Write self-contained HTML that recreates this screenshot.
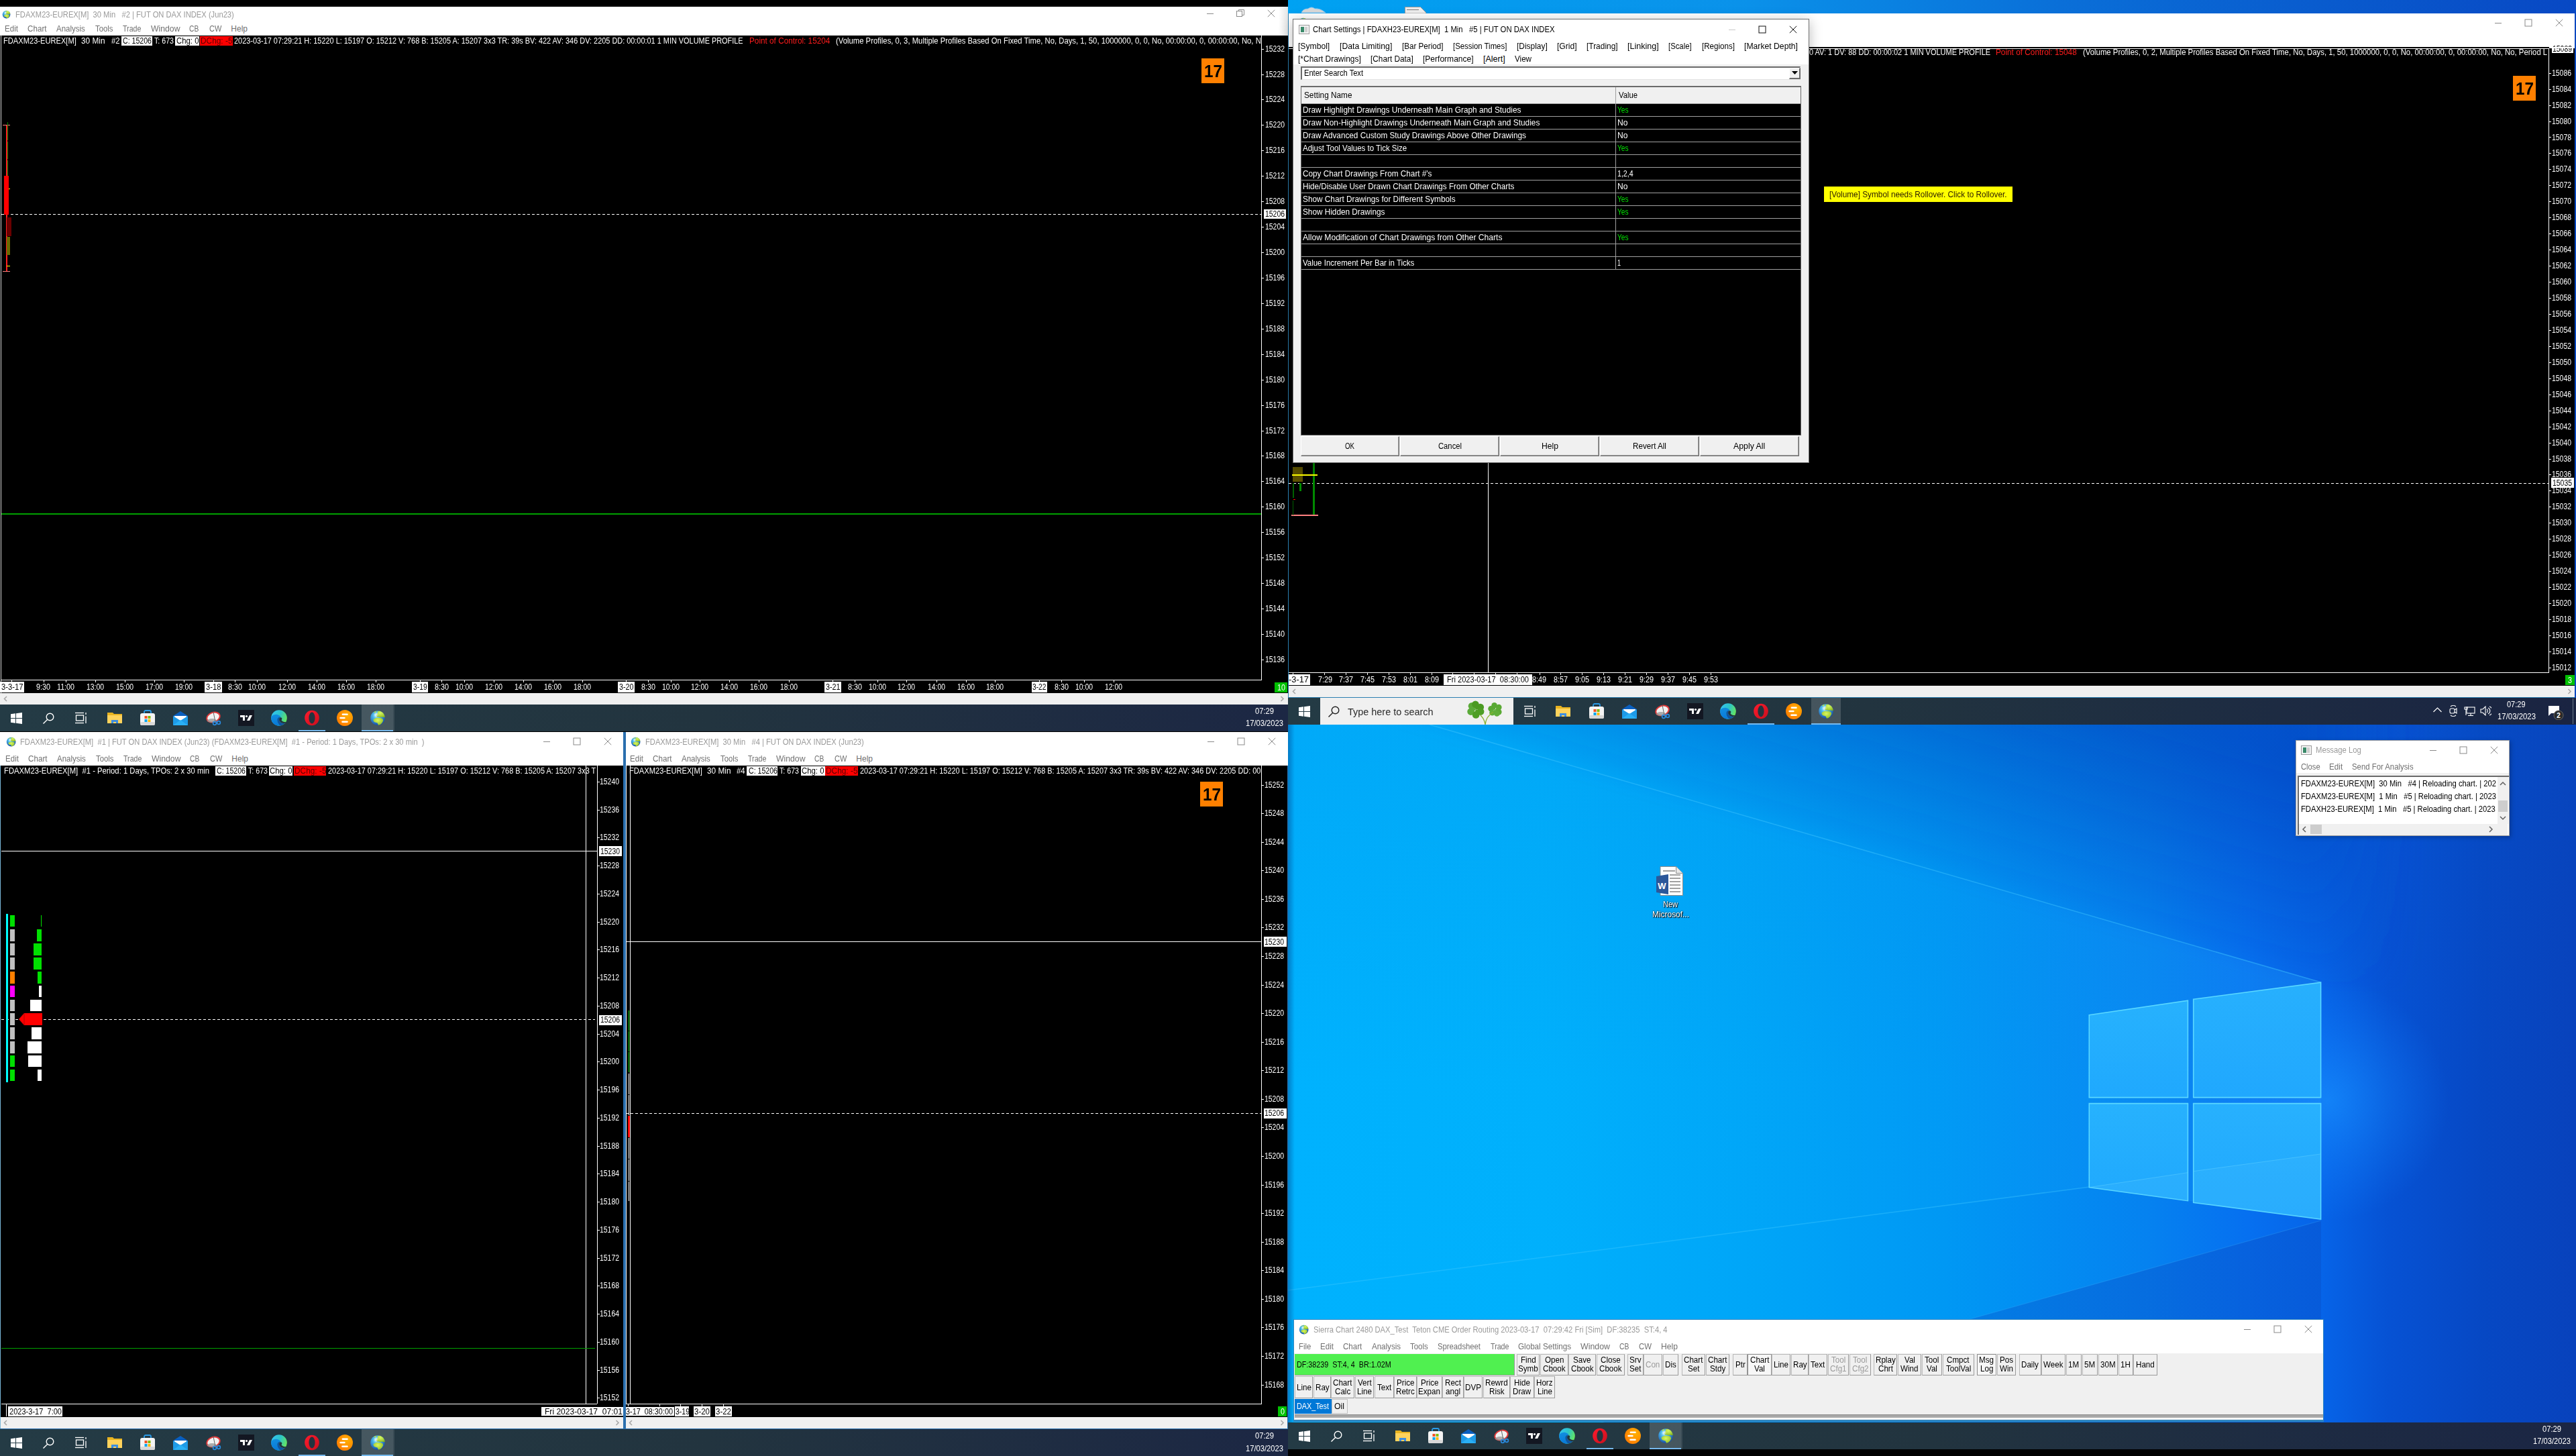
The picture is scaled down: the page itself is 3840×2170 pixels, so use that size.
<!DOCTYPE html>
<html><head><meta charset="utf-8"><style>
html,body{margin:0;padding:0;width:3840px;height:2170px;overflow:hidden;background:#000;}
body{position:relative;font-family:"Liberation Sans",sans-serif;}
div,svg{position:absolute;}
div{box-sizing:border-box;}
</style></head><body>
<div style="left:0px;top:10px;width:1920px;height:42px;background:#fff;"></div>
<div style="left:0px;top:52px;width:1920px;height:1px;background:#ececec;"></div>
<svg style="left:2.95455px;top:15.4545px" width="13.0909" height="13.0909" viewBox="0 0 24 24"><defs><radialGradient id="gg1" cx="0.42" cy="0.33" r="0.7"><stop offset="0" stop-color="#b8f0ff"/><stop offset="0.35" stop-color="#4ab8ec"/><stop offset="1" stop-color="#1448a0"/></radialGradient>
<radialGradient id="gc1" cx="0.45" cy="0.35" r="0.75"><stop offset="0" stop-color="#d8f860"/><stop offset="0.6" stop-color="#a8d038"/><stop offset="1" stop-color="#7aa818"/></radialGradient>
<radialGradient id="gh1" cx="0.5" cy="0.5" r="0.5"><stop offset="0" stop-color="#ffffff" stop-opacity="0.75"/><stop offset="1" stop-color="#ffffff" stop-opacity="0"/></radialGradient>
<clipPath id="gcl1"><circle cx="12" cy="12" r="10.8"/></clipPath></defs>
<circle cx="12" cy="12" r="10.8" fill="url(#gg1)"/>
<g clip-path="url(#gcl1)" fill="url(#gc1)">
<path d="M11.5,2.5 L16,1 L20,3 L23,7 L23.5,10.8 L21,11.2 L18.5,10.6 L16,11.3 L14,10.6 L11,10.4 L9.6,8.2 L10.6,6.2 L12,5z"/>
<path d="M6,3.8 L9.8,1.6 L10,3 L7.5,4.8z"/>
<path d="M5.5,15.6 L5.8,14 L9.7,11.7 L13,12 L16.4,12.1 L19.3,13.2 L20.3,15.9 L18.3,19.8 L15.5,22.3 L13.1,23 L11.6,19.4 L6.8,17.9z"/>
</g>
<circle cx="9.7" cy="7.3" r="4" fill="url(#gh1)"/></svg>
<div style="left:23.30px;top:14.00px;height:16px;line-height:16px;font-size:12.5px;color:#9a9a9a;white-space:pre;transform:scaleX(0.8945);transform-origin:0 0;">FDAXM23-EUREX[M]  30 Min   #2 | FUT ON DAX INDEX (Jun23)</div>
<div style="left:1906px;top:10px;width:14px;height:42px;background:linear-gradient(90deg,rgba(0,0,0,0),rgba(0,0,0,0.10));"></div>
<div style="left:1799px;top:20px;width:10px;height:1px;background:#8a8a8a;"></div>
<svg style="left:1843px;top:14px" width="12" height="12"><g fill="none" stroke="#8a8a8a" stroke-width="1"><path d="M3.5,3 v-2.5 h8 v8 h-3"/><rect x="0.5" y="2.5" width="8" height="8"/></g></svg>
<svg style="left:1889px;top:14px" width="12" height="12"><g stroke="#8a8a8a" stroke-width="1"><line x1="0.8" y1="0.8" x2="11.2" y2="11.2"/><line x1="11.2" y1="0.8" x2="0.8" y2="11.2"/></g></svg>
<div style="left:7.10px;top:35.00px;height:16px;line-height:16px;font-size:12px;color:#707070;white-space:pre;transform:scaleX(0.9624);transform-origin:0 0;">Edit</div>
<div style="left:41.40px;top:35.00px;height:16px;line-height:16px;font-size:12px;color:#707070;white-space:pre;transform:scaleX(0.9712);transform-origin:0 0;">Chart</div>
<div style="left:84.20px;top:35.00px;height:16px;line-height:16px;font-size:12px;color:#707070;white-space:pre;transform:scaleX(0.9578);transform-origin:0 0;">Analysis</div>
<div style="left:141.60px;top:35.00px;height:16px;line-height:16px;font-size:12px;color:#707070;white-space:pre;transform:scaleX(0.9424);transform-origin:0 0;">Tools</div>
<div style="left:182.60px;top:35.00px;height:16px;line-height:16px;font-size:12px;color:#707070;white-space:pre;transform:scaleX(0.8867);transform-origin:0 0;">Trade</div>
<div style="left:224.50px;top:35.00px;height:16px;line-height:16px;font-size:12px;color:#707070;white-space:pre;transform:scaleX(1.0192);transform-origin:0 0;">Window</div>
<div style="left:282.30px;top:35.00px;height:16px;line-height:16px;font-size:12px;color:#707070;white-space:pre;transform:scaleX(0.8578);transform-origin:0 0;">CB</div>
<div style="left:311.50px;top:35.00px;height:16px;line-height:16px;font-size:12px;color:#707070;white-space:pre;transform:scaleX(0.9154);transform-origin:0 0;">CW</div>
<div style="left:344.30px;top:35.00px;height:16px;line-height:16px;font-size:12px;color:#707070;white-space:pre;">Help</div>
<div style="left:1px;top:53px;width:1px;height:980px;background:#d8d8d8;"></div>
<div style="left:5.20px;top:52.50px;height:16px;line-height:16px;font-size:12px;color:#fff;white-space:pre;transform:scaleX(0.9271);transform-origin:0 0;">FDAXM23-EUREX[M]</div>
<div style="left:121.00px;top:52.50px;height:16px;line-height:16px;font-size:12px;color:#fff;white-space:pre;transform:scaleX(0.9856);transform-origin:0 0;">30 Min</div>
<div style="left:165.80px;top:52.50px;height:16px;line-height:16px;font-size:12px;color:#fff;white-space:pre;transform:scaleX(0.9515);transform-origin:0 0;">#2</div>
<div style="left:181px;top:54px;width:46px;height:14px;background:#fff;"></div>
<div style="left:183.00px;top:52.50px;height:16px;line-height:16px;font-size:12px;color:#000;white-space:pre;transform:scaleX(0.8829);transform-origin:0 0;">C: 15206</div>
<div style="left:229.50px;top:52.50px;height:16px;line-height:16px;font-size:12px;color:#fff;white-space:pre;transform:scaleX(0.8871);transform-origin:0 0;">T: 673</div>
<div style="left:261px;top:54px;width:36px;height:14px;background:#fff;"></div>
<div style="left:262.50px;top:52.50px;height:16px;line-height:16px;font-size:12px;color:#000;white-space:pre;transform:scaleX(0.9475);transform-origin:0 0;">Chg: 0</div>
<div style="left:297.7px;top:54px;width:49.3px;height:14px;background:#ff0000;"></div>
<div style="left:298.50px;top:52.50px;height:16px;line-height:16px;font-size:12px;color:#5a0000;white-space:pre;transform:scaleX(0.9892);transform-origin:0 0;">DChg: -5</div>
<div style="left:349.00px;top:52.50px;height:16px;line-height:16px;font-size:12px;color:#fff;white-space:pre;transform:scaleX(0.9093);transform-origin:0 0;">2023-03-17 07:29:21 H: 15220 L: 15197 O: 15212 V: 768 B: 15205 A: 15207 3x3 TR: 39s BV: 422 AV: 346 DV: 2205 DD: 00:00:01 1 MIN VOLUME PROFILE</div>
<div style="left:1117.00px;top:52.50px;height:16px;line-height:16px;font-size:12px;color:#ff1c1c;white-space:pre;transform:scaleX(0.9801);transform-origin:0 0;">Point of Control: 15204</div>
<div style="left:1246.00px;top:52.50px;height:16px;line-height:16px;font-size:12px;color:#fff;white-space:pre;transform:scaleX(0.9417);transform-origin:0 0;">(Volume Profiles, 0, 3, Multiple Profiles Based On Fixed Time, No, Days, 1, 50, 1000000, 0, 0, No, 00:00:00, 0, 00:00:00, No, N</div>
<div style="left:1880px;top:53px;width:1px;height:961px;background:#fff;"></div>
<div style="left:1px;top:1013px;width:1880px;height:1px;background:#fff;"></div>
<div style="left:1881px;top:73px;width:3px;height:1px;background:#fff;"></div>
<div style="left:1886.00px;top:64.60px;height:16px;line-height:16px;font-size:12px;color:#fff;white-space:pre;transform:scaleX(0.8691);transform-origin:0 0;">15232</div>
<div style="left:1881px;top:111px;width:3px;height:1px;background:#fff;"></div>
<div style="left:1886.00px;top:102.53px;height:16px;line-height:16px;font-size:12px;color:#fff;white-space:pre;transform:scaleX(0.8691);transform-origin:0 0;">15228</div>
<div style="left:1881px;top:148px;width:3px;height:1px;background:#fff;"></div>
<div style="left:1886.00px;top:140.46px;height:16px;line-height:16px;font-size:12px;color:#fff;white-space:pre;transform:scaleX(0.8691);transform-origin:0 0;">15224</div>
<div style="left:1881px;top:186px;width:3px;height:1px;background:#fff;"></div>
<div style="left:1886.00px;top:178.39px;height:16px;line-height:16px;font-size:12px;color:#fff;white-space:pre;transform:scaleX(0.8691);transform-origin:0 0;">15220</div>
<div style="left:1881px;top:224px;width:3px;height:1px;background:#fff;"></div>
<div style="left:1886.00px;top:216.32px;height:16px;line-height:16px;font-size:12px;color:#fff;white-space:pre;transform:scaleX(0.8691);transform-origin:0 0;">15216</div>
<div style="left:1881px;top:262px;width:3px;height:1px;background:#fff;"></div>
<div style="left:1886.00px;top:254.25px;height:16px;line-height:16px;font-size:12px;color:#fff;white-space:pre;transform:scaleX(0.8691);transform-origin:0 0;">15212</div>
<div style="left:1881px;top:300px;width:3px;height:1px;background:#fff;"></div>
<div style="left:1886.00px;top:292.18px;height:16px;line-height:16px;font-size:12px;color:#fff;white-space:pre;transform:scaleX(0.8691);transform-origin:0 0;">15208</div>
<div style="left:1881px;top:338px;width:3px;height:1px;background:#fff;"></div>
<div style="left:1886.00px;top:330.11px;height:16px;line-height:16px;font-size:12px;color:#fff;white-space:pre;transform:scaleX(0.8691);transform-origin:0 0;">15204</div>
<div style="left:1881px;top:376px;width:3px;height:1px;background:#fff;"></div>
<div style="left:1886.00px;top:368.04px;height:16px;line-height:16px;font-size:12px;color:#fff;white-space:pre;transform:scaleX(0.8691);transform-origin:0 0;">15200</div>
<div style="left:1881px;top:414px;width:3px;height:1px;background:#fff;"></div>
<div style="left:1886.00px;top:405.97px;height:16px;line-height:16px;font-size:12px;color:#fff;white-space:pre;transform:scaleX(0.8691);transform-origin:0 0;">15196</div>
<div style="left:1881px;top:452px;width:3px;height:1px;background:#fff;"></div>
<div style="left:1886.00px;top:443.90px;height:16px;line-height:16px;font-size:12px;color:#fff;white-space:pre;transform:scaleX(0.8691);transform-origin:0 0;">15192</div>
<div style="left:1881px;top:490px;width:3px;height:1px;background:#fff;"></div>
<div style="left:1886.00px;top:481.83px;height:16px;line-height:16px;font-size:12px;color:#fff;white-space:pre;transform:scaleX(0.8691);transform-origin:0 0;">15188</div>
<div style="left:1881px;top:528px;width:3px;height:1px;background:#fff;"></div>
<div style="left:1886.00px;top:519.76px;height:16px;line-height:16px;font-size:12px;color:#fff;white-space:pre;transform:scaleX(0.8691);transform-origin:0 0;">15184</div>
<div style="left:1881px;top:566px;width:3px;height:1px;background:#fff;"></div>
<div style="left:1886.00px;top:557.69px;height:16px;line-height:16px;font-size:12px;color:#fff;white-space:pre;transform:scaleX(0.8691);transform-origin:0 0;">15180</div>
<div style="left:1881px;top:604px;width:3px;height:1px;background:#fff;"></div>
<div style="left:1886.00px;top:595.62px;height:16px;line-height:16px;font-size:12px;color:#fff;white-space:pre;transform:scaleX(0.8691);transform-origin:0 0;">15176</div>
<div style="left:1881px;top:642px;width:3px;height:1px;background:#fff;"></div>
<div style="left:1886.00px;top:633.55px;height:16px;line-height:16px;font-size:12px;color:#fff;white-space:pre;transform:scaleX(0.8691);transform-origin:0 0;">15172</div>
<div style="left:1881px;top:679px;width:3px;height:1px;background:#fff;"></div>
<div style="left:1886.00px;top:671.48px;height:16px;line-height:16px;font-size:12px;color:#fff;white-space:pre;transform:scaleX(0.8691);transform-origin:0 0;">15168</div>
<div style="left:1881px;top:717px;width:3px;height:1px;background:#fff;"></div>
<div style="left:1886.00px;top:709.41px;height:16px;line-height:16px;font-size:12px;color:#fff;white-space:pre;transform:scaleX(0.8691);transform-origin:0 0;">15164</div>
<div style="left:1881px;top:755px;width:3px;height:1px;background:#fff;"></div>
<div style="left:1886.00px;top:747.34px;height:16px;line-height:16px;font-size:12px;color:#fff;white-space:pre;transform:scaleX(0.8691);transform-origin:0 0;">15160</div>
<div style="left:1881px;top:793px;width:3px;height:1px;background:#fff;"></div>
<div style="left:1886.00px;top:785.27px;height:16px;line-height:16px;font-size:12px;color:#fff;white-space:pre;transform:scaleX(0.8691);transform-origin:0 0;">15156</div>
<div style="left:1881px;top:831px;width:3px;height:1px;background:#fff;"></div>
<div style="left:1886.00px;top:823.20px;height:16px;line-height:16px;font-size:12px;color:#fff;white-space:pre;transform:scaleX(0.8691);transform-origin:0 0;">15152</div>
<div style="left:1881px;top:869px;width:3px;height:1px;background:#fff;"></div>
<div style="left:1886.00px;top:861.13px;height:16px;line-height:16px;font-size:12px;color:#fff;white-space:pre;transform:scaleX(0.8691);transform-origin:0 0;">15148</div>
<div style="left:1881px;top:907px;width:3px;height:1px;background:#fff;"></div>
<div style="left:1886.00px;top:899.06px;height:16px;line-height:16px;font-size:12px;color:#fff;white-space:pre;transform:scaleX(0.8691);transform-origin:0 0;">15144</div>
<div style="left:1881px;top:945px;width:3px;height:1px;background:#fff;"></div>
<div style="left:1886.00px;top:936.99px;height:16px;line-height:16px;font-size:12px;color:#fff;white-space:pre;transform:scaleX(0.8691);transform-origin:0 0;">15140</div>
<div style="left:1881px;top:983px;width:3px;height:1px;background:#fff;"></div>
<div style="left:1886.00px;top:974.92px;height:16px;line-height:16px;font-size:12px;color:#fff;white-space:pre;transform:scaleX(0.8691);transform-origin:0 0;">15136</div>
<div style="left:2px;top:319px;width:1878px;height:1px;background:repeating-linear-gradient(90deg,#fff 0 4px,transparent 4px 7px);"></div>
<div style="left:1884px;top:312px;width:33px;height:14px;background:#fff;"></div>
<div style="left:1886.00px;top:311.00px;height:16px;line-height:16px;font-size:12px;color:#000;white-space:pre;transform:scaleX(0.8691);transform-origin:0 0;">15206</div>
<div style="left:2px;top:765px;width:1878px;height:1.5px;background:#00a000;"></div>
<div style="left:1791px;top:87px;width:34px;height:37px;background:#ff8000;"></div>
<div style="left:1794.50px;top:89.00px;height:34px;line-height:34px;font-size:26px;color:#000;white-space:pre;font-weight:700;transform:scaleX(0.9336);transform-origin:0 0;">17</div>
<div style="left:9px;top:186px;width:1.5px;height:219px;background:#ff2020;"></div>
<div style="left:4px;top:186px;width:11px;height:1.2px;background:#ff8080;"></div>
<div style="left:4px;top:404px;width:11px;height:1.2px;background:#ff8080;"></div>
<div style="left:10.5px;top:182px;width:1.2px;height:27px;background:#008000;"></div>
<div style="left:10.5px;top:211px;width:1.2px;height:26px;background:#008000;"></div>
<div style="left:10.5px;top:239px;width:1.2px;height:23px;background:#008000;"></div>
<div style="left:6px;top:262px;width:7px;height:57.5px;background:#ff0000;"></div>
<div style="left:10px;top:324px;width:7px;height:28px;background:#6a0000;"></div>
<div style="left:10px;top:353px;width:5px;height:27px;background:#6a6a00;"></div>
<div style="left:13px;top:281px;width:2px;height:1.2px;background:#ffff00;"></div>
<div style="left:10px;top:395.5px;width:5px;height:1.2px;background:#ffff00;"></div>
<div style="left:17px;top:1014px;width:1px;height:3px;background:#fff;"></div>
<div style="left:65px;top:1014px;width:1px;height:3px;background:#fff;"></div>
<div style="left:98px;top:1014px;width:1px;height:3px;background:#fff;"></div>
<div style="left:142px;top:1014px;width:1px;height:3px;background:#fff;"></div>
<div style="left:186px;top:1014px;width:1px;height:3px;background:#fff;"></div>
<div style="left:230px;top:1014px;width:1px;height:3px;background:#fff;"></div>
<div style="left:274px;top:1014px;width:1px;height:3px;background:#fff;"></div>
<div style="left:318px;top:1014px;width:1px;height:3px;background:#fff;"></div>
<div style="left:350px;top:1014px;width:1px;height:3px;background:#fff;"></div>
<div style="left:383px;top:1014px;width:1px;height:3px;background:#fff;"></div>
<div style="left:428px;top:1014px;width:1px;height:3px;background:#fff;"></div>
<div style="left:472px;top:1014px;width:1px;height:3px;background:#fff;"></div>
<div style="left:516px;top:1014px;width:1px;height:3px;background:#fff;"></div>
<div style="left:560px;top:1014px;width:1px;height:3px;background:#fff;"></div>
<div style="left:626px;top:1014px;width:1px;height:3px;background:#fff;"></div>
<div style="left:658px;top:1014px;width:1px;height:3px;background:#fff;"></div>
<div style="left:692px;top:1014px;width:1px;height:3px;background:#fff;"></div>
<div style="left:736px;top:1014px;width:1px;height:3px;background:#fff;"></div>
<div style="left:780px;top:1014px;width:1px;height:3px;background:#fff;"></div>
<div style="left:824px;top:1014px;width:1px;height:3px;background:#fff;"></div>
<div style="left:868px;top:1014px;width:1px;height:3px;background:#fff;"></div>
<div style="left:933px;top:1014px;width:1px;height:3px;background:#fff;"></div>
<div style="left:966px;top:1014px;width:1px;height:3px;background:#fff;"></div>
<div style="left:1000px;top:1014px;width:1px;height:3px;background:#fff;"></div>
<div style="left:1043px;top:1014px;width:1px;height:3px;background:#fff;"></div>
<div style="left:1087px;top:1014px;width:1px;height:3px;background:#fff;"></div>
<div style="left:1131px;top:1014px;width:1px;height:3px;background:#fff;"></div>
<div style="left:1176px;top:1014px;width:1px;height:3px;background:#fff;"></div>
<div style="left:1241px;top:1014px;width:1px;height:3px;background:#fff;"></div>
<div style="left:1274px;top:1014px;width:1px;height:3px;background:#fff;"></div>
<div style="left:1308px;top:1014px;width:1px;height:3px;background:#fff;"></div>
<div style="left:1351px;top:1014px;width:1px;height:3px;background:#fff;"></div>
<div style="left:1396px;top:1014px;width:1px;height:3px;background:#fff;"></div>
<div style="left:1440px;top:1014px;width:1px;height:3px;background:#fff;"></div>
<div style="left:1483px;top:1014px;width:1px;height:3px;background:#fff;"></div>
<div style="left:1549px;top:1014px;width:1px;height:3px;background:#fff;"></div>
<div style="left:1582px;top:1014px;width:1px;height:3px;background:#fff;"></div>
<div style="left:1616px;top:1014px;width:1px;height:3px;background:#fff;"></div>
<div style="left:1660px;top:1014px;width:1px;height:3px;background:#fff;"></div>
<div style="left:0px;top:1016px;width:35.6px;height:16px;background:#fff;"></div>
<div style="left:1.50px;top:1016.00px;height:16px;line-height:16px;font-size:12px;color:#000;white-space:pre;transform:scaleX(0.9398);transform-origin:0 0;">3-3-17</div>
<div style="left:54.10px;top:1016.00px;height:16px;line-height:16px;font-size:12px;color:#fff;white-space:pre;transform:scaleX(0.8991);transform-origin:0 0;">9:30</div>
<div style="left:84.80px;top:1016.00px;height:16px;line-height:16px;font-size:12px;color:#fff;white-space:pre;transform:scaleX(0.8923);transform-origin:0 0;">11:00</div>
<div style="left:128.50px;top:1016.00px;height:16px;line-height:16px;font-size:12px;color:#fff;white-space:pre;transform:scaleX(0.8658);transform-origin:0 0;">13:00</div>
<div style="left:172.50px;top:1016.00px;height:16px;line-height:16px;font-size:12px;color:#fff;white-space:pre;transform:scaleX(0.8658);transform-origin:0 0;">15:00</div>
<div style="left:216.60px;top:1016.00px;height:16px;line-height:16px;font-size:12px;color:#fff;white-space:pre;transform:scaleX(0.8658);transform-origin:0 0;">17:00</div>
<div style="left:260.60px;top:1016.00px;height:16px;line-height:16px;font-size:12px;color:#fff;white-space:pre;transform:scaleX(0.8658);transform-origin:0 0;">19:00</div>
<div style="left:305px;top:1016px;width:25.5px;height:16px;background:#fff;"></div>
<div style="left:306.50px;top:1016.00px;height:16px;line-height:16px;font-size:12px;color:#000;white-space:pre;transform:scaleX(0.9368);transform-origin:0 0;">3-18</div>
<div style="left:340.00px;top:1016.00px;height:16px;line-height:16px;font-size:12px;color:#fff;white-space:pre;transform:scaleX(0.8991);transform-origin:0 0;">8:30</div>
<div style="left:370.30px;top:1016.00px;height:16px;line-height:16px;font-size:12px;color:#fff;white-space:pre;transform:scaleX(0.8658);transform-origin:0 0;">10:00</div>
<div style="left:414.70px;top:1016.00px;height:16px;line-height:16px;font-size:12px;color:#fff;white-space:pre;transform:scaleX(0.8658);transform-origin:0 0;">12:00</div>
<div style="left:458.70px;top:1016.00px;height:16px;line-height:16px;font-size:12px;color:#fff;white-space:pre;transform:scaleX(0.8658);transform-origin:0 0;">14:00</div>
<div style="left:502.70px;top:1016.00px;height:16px;line-height:16px;font-size:12px;color:#fff;white-space:pre;transform:scaleX(0.8658);transform-origin:0 0;">16:00</div>
<div style="left:546.70px;top:1016.00px;height:16px;line-height:16px;font-size:12px;color:#fff;white-space:pre;transform:scaleX(0.8658);transform-origin:0 0;">18:00</div>
<div style="left:614px;top:1016px;width:23.7px;height:16px;background:#fff;"></div>
<div style="left:615.50px;top:1016.00px;height:16px;line-height:16px;font-size:12px;color:#000;white-space:pre;transform:scaleX(0.8619);transform-origin:0 0;">3-19</div>
<div style="left:647.50px;top:1016.00px;height:16px;line-height:16px;font-size:12px;color:#fff;white-space:pre;transform:scaleX(0.8991);transform-origin:0 0;">8:30</div>
<div style="left:678.80px;top:1016.00px;height:16px;line-height:16px;font-size:12px;color:#fff;white-space:pre;transform:scaleX(0.8658);transform-origin:0 0;">10:00</div>
<div style="left:722.50px;top:1016.00px;height:16px;line-height:16px;font-size:12px;color:#fff;white-space:pre;transform:scaleX(0.8658);transform-origin:0 0;">12:00</div>
<div style="left:766.50px;top:1016.00px;height:16px;line-height:16px;font-size:12px;color:#fff;white-space:pre;transform:scaleX(0.8658);transform-origin:0 0;">14:00</div>
<div style="left:810.50px;top:1016.00px;height:16px;line-height:16px;font-size:12px;color:#fff;white-space:pre;transform:scaleX(0.8658);transform-origin:0 0;">16:00</div>
<div style="left:854.60px;top:1016.00px;height:16px;line-height:16px;font-size:12px;color:#fff;white-space:pre;transform:scaleX(0.8658);transform-origin:0 0;">18:00</div>
<div style="left:921px;top:1016px;width:24.5px;height:16px;background:#fff;"></div>
<div style="left:922.50px;top:1016.00px;height:16px;line-height:16px;font-size:12px;color:#000;white-space:pre;transform:scaleX(0.8952);transform-origin:0 0;">3-20</div>
<div style="left:955.50px;top:1016.00px;height:16px;line-height:16px;font-size:12px;color:#fff;white-space:pre;transform:scaleX(0.8991);transform-origin:0 0;">8:30</div>
<div style="left:986.80px;top:1016.00px;height:16px;line-height:16px;font-size:12px;color:#fff;white-space:pre;transform:scaleX(0.8658);transform-origin:0 0;">10:00</div>
<div style="left:1030.00px;top:1016.00px;height:16px;line-height:16px;font-size:12px;color:#fff;white-space:pre;transform:scaleX(0.8658);transform-origin:0 0;">12:00</div>
<div style="left:1074.00px;top:1016.00px;height:16px;line-height:16px;font-size:12px;color:#fff;white-space:pre;transform:scaleX(0.8658);transform-origin:0 0;">14:00</div>
<div style="left:1118.00px;top:1016.00px;height:16px;line-height:16px;font-size:12px;color:#fff;white-space:pre;transform:scaleX(0.8658);transform-origin:0 0;">16:00</div>
<div style="left:1162.60px;top:1016.00px;height:16px;line-height:16px;font-size:12px;color:#fff;white-space:pre;transform:scaleX(0.8658);transform-origin:0 0;">18:00</div>
<div style="left:1229px;top:1016px;width:24.6px;height:16px;background:#fff;"></div>
<div style="left:1230.50px;top:1016.00px;height:16px;line-height:16px;font-size:12px;color:#000;white-space:pre;transform:scaleX(0.8993);transform-origin:0 0;">3-21</div>
<div style="left:1263.50px;top:1016.00px;height:16px;line-height:16px;font-size:12px;color:#fff;white-space:pre;transform:scaleX(0.8991);transform-origin:0 0;">8:30</div>
<div style="left:1294.80px;top:1016.00px;height:16px;line-height:16px;font-size:12px;color:#fff;white-space:pre;transform:scaleX(0.8658);transform-origin:0 0;">10:00</div>
<div style="left:1338.40px;top:1016.00px;height:16px;line-height:16px;font-size:12px;color:#fff;white-space:pre;transform:scaleX(0.8658);transform-origin:0 0;">12:00</div>
<div style="left:1382.70px;top:1016.00px;height:16px;line-height:16px;font-size:12px;color:#fff;white-space:pre;transform:scaleX(0.8658);transform-origin:0 0;">14:00</div>
<div style="left:1426.70px;top:1016.00px;height:16px;line-height:16px;font-size:12px;color:#fff;white-space:pre;transform:scaleX(0.8658);transform-origin:0 0;">16:00</div>
<div style="left:1470.00px;top:1016.00px;height:16px;line-height:16px;font-size:12px;color:#fff;white-space:pre;transform:scaleX(0.8658);transform-origin:0 0;">18:00</div>
<div style="left:1537.5px;top:1016px;width:23.5px;height:16px;background:#fff;"></div>
<div style="left:1539.00px;top:1016.00px;height:16px;line-height:16px;font-size:12px;color:#000;white-space:pre;transform:scaleX(0.8535);transform-origin:0 0;">3-22</div>
<div style="left:1571.50px;top:1016.00px;height:16px;line-height:16px;font-size:12px;color:#fff;white-space:pre;transform:scaleX(0.8991);transform-origin:0 0;">8:30</div>
<div style="left:1603.00px;top:1016.00px;height:16px;line-height:16px;font-size:12px;color:#fff;white-space:pre;transform:scaleX(0.8658);transform-origin:0 0;">10:00</div>
<div style="left:1646.50px;top:1016.00px;height:16px;line-height:16px;font-size:12px;color:#fff;white-space:pre;transform:scaleX(0.8658);transform-origin:0 0;">12:00</div>
<div style="left:1900px;top:1017px;width:19px;height:15px;background:#00c000;"></div>
<div style="left:1903.50px;top:1016.50px;height:16px;line-height:16px;font-size:12px;color:#fff;white-space:pre;transform:scaleX(0.8990);transform-origin:0 0;">10</div>
<div style="left:0px;top:1033px;width:1920px;height:17px;background:#f0f0f0;"></div>
<svg style="left:4.5px;top:1037px" width="7" height="9"><path d="M5,1 L1.5,4.5 L5,8" fill="none" stroke="#a8a8a8" stroke-width="1.6"/></svg>
<svg style="left:1907.5px;top:1037px" width="7" height="9"><path d="M1.5,1 L5,4.5 L1.5,8" fill="none" stroke="#a8a8a8" stroke-width="1.6"/></svg>
<div style="left:0px;top:1050px;width:1920px;height:40px;background:linear-gradient(90deg,#243b45 0%,#22343f 55%,#1c2744 100%);"></div>
<div style="left:539px;top:1050px;width:47px;height:40px;background:rgba(255,255,255,0.16);"></div>
<div style="left:539px;top:1088px;width:47px;height:2px;background:#76b9ed;"></div>
<div style="left:586px;top:1050px;width:1.5px;height:40px;background:rgba(255,255,255,0.10);"></div>
<div style="left:445px;top:1088px;width:40px;height:2px;background:#76b9ed;"></div>
<svg style="left:15.5px;top:1061.5px" width="17.0" height="17.0" viewBox="0 0 17 17"><g fill="#fff">
<polygon points="0,2.3 7,1.3 7,8 0,8"/>
<polygon points="8,1.2 17,0 17,8 8,8"/>
<polygon points="0,9 7,9 7,15.7 0,14.7"/>
<polygon points="8,9 17,9 17,17 8,15.8"/>
</g></svg>
<svg style="left:63px;top:1061px" width="18" height="18" viewBox="0 0 18 18"><g fill="none" stroke="#fff" stroke-width="1.4"><circle cx="11.5" cy="7.5" r="5.3"/><line x1="7.8" y1="11.3" x2="1.5" y2="17.5"/></g></svg>
<svg style="left:111px;top:1061px" width="19" height="18" viewBox="0 0 19 18"><g fill="none" stroke="#fff" stroke-width="1.3">
<rect x="2.5" y="5" width="11" height="8"/>
<line x1="1" y1="1.5" x2="14" y2="1.5"/><line x1="1" y1="16.5" x2="14" y2="16.5"/>
<line x1="17" y1="1" x2="17" y2="4"/><line x1="17" y1="6.5" x2="17" y2="17"/>
</g></svg>
<svg style="left:158.5px;top:1059px" width="24" height="21" viewBox="0 0 24 21"><path d="M1,3 h8 l2,2 h12 v14 h-22 z" fill="#e8b320"/>
<rect x="1" y="7" width="22" height="12" fill="#ffd35c"/>
<path d="M7,19 v-5 h10 v5 h-3 v-2 h-4 v2 z" fill="#3e8ee0"/></svg>
<svg style="left:207.5px;top:1058px" width="24" height="24" viewBox="0 0 24 24"><path d="M7,6 v-3 a2,2 0 0 1 2,-2 h6 a2,2 0 0 1 2,2 v3" fill="none" stroke="#2a9be8" stroke-width="1.8"/>
<rect x="1" y="5" width="22" height="18" rx="3" fill="#f4f4f4"/>
<rect x="1" y="18" width="22" height="5" rx="2" fill="#d8d8d8"/>
<rect x="7.5" y="9" width="4" height="4" fill="#f35325"/><rect x="12.5" y="9" width="4" height="4" fill="#81bc06"/>
<rect x="7.5" y="14" width="4" height="4" fill="#05a6f0"/><rect x="12.5" y="14" width="4" height="4" fill="#ffba08"/></svg>
<svg style="left:257px;top:1059px" width="24" height="23" viewBox="0 0 24 23"><path d="M1,8 l11,-7 l11,7 v13 h-22 z" fill="#0a5fbf"/>
<path d="M3,8 h18 v6 l-9,5 l-9,-5 z" fill="#fff"/>
<path d="M1,8 l11,7 l11,-7 v14 h-22 z" fill="#1e9be8"/>
<path d="M1,22 l11,-8 l11,8 z" fill="#2ab0f5"/></svg>
<svg style="left:307px;top:1059px" width="24" height="23" viewBox="0 0 24 23"><ellipse cx="11" cy="10" rx="10" ry="7" fill="#f2f2f2" stroke="#e03a3a" stroke-width="2" transform="rotate(-20 11 10)"/>
<ellipse cx="9" cy="15" rx="7" ry="3" fill="#9a9a9a" opacity="0.8"/>
<line x1="11" y1="2" x2="14" y2="17" stroke="#666" stroke-width="1"/>
<circle cx="13" cy="19" r="2.4" fill="none" stroke="#2a8be0" stroke-width="1.6"/>
<circle cx="19" cy="18" r="2.4" fill="none" stroke="#2a8be0" stroke-width="1.6"/></svg>
<svg style="left:355px;top:1058px" width="24" height="24" viewBox="0 0 24 24"><rect x="0" y="0" width="24" height="24" fill="#131722"/>
<path d="M3,8 h7 v8 h-3 v-5 h-4 z" fill="#fff"/><circle cx="12.5" cy="9.5" r="1.6" fill="#fff"/>
<path d="M13,16 l4,-8 h4 l-4,8 z" fill="#fff"/></svg>
<svg style="left:404px;top:1058px" width="24" height="24" viewBox="0 0 24 24"><defs><linearGradient id="eg1a" x1="0" y1="0.2" x2="1" y2="0.6"><stop offset="0" stop-color="#35c4f4"/><stop offset="0.5" stop-color="#2cc4c8"/><stop offset="1" stop-color="#6ae858"/></linearGradient>
<linearGradient id="eg1b" x1="0" y1="0" x2="0.2" y2="1"><stop offset="0" stop-color="#1290e0"/><stop offset="1" stop-color="#0878d8"/></linearGradient>
<clipPath id="ec1"><circle cx="12" cy="12" r="11.8"/></clipPath></defs>
<g clip-path="url(#ec1)">
<rect x="0" y="0" width="24" height="24" fill="url(#eg1a)"/>
<path d="M-1,11 Q3,6.5 8,6.8 Q12.5,7.2 14.5,10.5 Q11,10 9.5,13 Q8.5,17 11,20.5 Q13,24.5 17,25 L-1,25z" fill="url(#eg1b)"/>
<path d="M14.5,10.5 Q11,10 9.5,13 Q8.5,17 11,20.5 Q13,24.5 17,25 L25,25 L25,18.6 Q21,20.2 18.5,20 Q13.8,19.5 12.2,15.5 Q11.6,12.5 14.5,10.5z" fill="#0e54a4"/>
<path d="M12.2,15.5 Q11.6,12 14,11.3 Q16,11 16.4,13 Q16.2,14.5 15.5,15.2 Q16.5,17.5 19.5,18 Q22,18.3 25,17.8 L25,18.6 Q21,20.2 18.5,20 Q13.8,19.5 12.2,15.5z" fill="#22343f"/>
</g></svg>
<svg style="left:453px;top:1058px" width="24" height="24" viewBox="0 0 24 24"><defs><linearGradient id="opg" x1="0" y1="0" x2="1" y2="1"><stop offset="0" stop-color="#ff1b2d"/><stop offset="1" stop-color="#c8101e"/></linearGradient></defs>
<ellipse cx="12" cy="12" rx="10.8" ry="11.2" fill="url(#opg)"/>
<ellipse cx="12" cy="12" rx="4.6" ry="8.4" fill="#22343f"/></svg>
<svg style="left:502px;top:1058px" width="24" height="24" viewBox="0 0 24 24"><defs><radialGradient id="org" cx="0.65" cy="0.35" r="0.75"><stop offset="0" stop-color="#ffb000"/><stop offset="1" stop-color="#ff7a00"/></radialGradient></defs>
<circle cx="12" cy="12" r="12" fill="url(#org)"/>
<rect x="7.6" y="5.4" width="9.2" height="2.6" rx="1.3" fill="#fff"/>
<rect x="4.3" y="10.7" width="8.4" height="2.6" rx="1.3" fill="#fff"/>
<rect x="7.2" y="16.5" width="9.6" height="2.6" rx="1.3" fill="#fff"/></svg>
<svg style="left:550.5px;top:1058px" width="24" height="24" viewBox="0 0 24 24"><defs><radialGradient id="gg2" cx="0.42" cy="0.33" r="0.7"><stop offset="0" stop-color="#b8f0ff"/><stop offset="0.35" stop-color="#4ab8ec"/><stop offset="1" stop-color="#1448a0"/></radialGradient>
<radialGradient id="gc2" cx="0.45" cy="0.35" r="0.75"><stop offset="0" stop-color="#d8f860"/><stop offset="0.6" stop-color="#a8d038"/><stop offset="1" stop-color="#7aa818"/></radialGradient>
<radialGradient id="gh2" cx="0.5" cy="0.5" r="0.5"><stop offset="0" stop-color="#ffffff" stop-opacity="0.75"/><stop offset="1" stop-color="#ffffff" stop-opacity="0"/></radialGradient>
<clipPath id="gcl2"><circle cx="12" cy="12" r="10.8"/></clipPath></defs>
<circle cx="12" cy="12" r="10.8" fill="url(#gg2)"/>
<g clip-path="url(#gcl2)" fill="url(#gc2)">
<path d="M11.5,2.5 L16,1 L20,3 L23,7 L23.5,10.8 L21,11.2 L18.5,10.6 L16,11.3 L14,10.6 L11,10.4 L9.6,8.2 L10.6,6.2 L12,5z"/>
<path d="M6,3.8 L9.8,1.6 L10,3 L7.5,4.8z"/>
<path d="M5.5,15.6 L5.8,14 L9.7,11.7 L13,12 L16.4,12.1 L19.3,13.2 L20.3,15.9 L18.3,19.8 L15.5,22.3 L13.1,23 L11.6,19.4 L6.8,17.9z"/>
</g>
<circle cx="9.7" cy="7.3" r="4" fill="url(#gh2)"/></svg>
<div style="left:1870.50px;top:1052.00px;height:16px;line-height:16px;font-size:12px;color:#fff;white-space:pre;transform:scaleX(0.9324);transform-origin:0 0;">07:29</div>
<div style="left:1856.50px;top:1070.40px;height:16px;line-height:16px;font-size:12px;color:#fff;white-space:pre;transform:scaleX(0.9324);transform-origin:0 0;">17/03/2023</div>
<div style="left:1920px;top:0px;width:1920px;height:20px;background:linear-gradient(90deg,#00a2f2 0%,#0a92ea 35%,#0a6fd8 60%,#0848c4 100%);"></div>
<svg style="left:1939px;top:9px" width="38" height="11"><path d="M1,10 q2,-6 10,-6 q5,-4 10,0 q8,-1 16,6z" fill="#d8d8d8" stroke="#8cc8f0" stroke-width="1"/></svg>
<svg style="left:2094px;top:10px" width="32" height="10"><path d="M0.5,10 v-9.5 h23 l8,8 v1.5z" fill="#eee" stroke="#999" stroke-width="1"/><line x1="3" y1="4.5" x2="21" y2="4.5" stroke="#888" stroke-width="1.2"/></svg>
<div style="left:1920px;top:20px;width:1919px;height:1020px;background:#fff;"></div>
<div style="left:1920px;top:20px;width:1px;height:1020px;background:#2b7fb0;"></div>
<div style="left:1921px;top:70px;width:1917px;height:952px;background:#000;"></div>
<div style="left:1921px;top:71.5px;width:1878px;height:1px;background:#fff;"></div>
<div style="left:3719px;top:34px;width:10px;height:1px;background:#8a8a8a;"></div>
<svg style="left:3763px;top:28px" width="12" height="12"><rect x="1" y="1" width="10" height="10" fill="none" stroke="#8a8a8a" stroke-width="1"/></svg>
<svg style="left:3809px;top:28px" width="12" height="12"><g stroke="#8a8a8a" stroke-width="1"><line x1="0.8" y1="0.8" x2="11.2" y2="11.2"/><line x1="11.2" y1="0.8" x2="0.8" y2="11.2"/></g></svg>
<svg style="left:1935.36px;top:26.3636px" width="15.2727" height="15.2727" viewBox="0 0 24 24"><defs><radialGradient id="gg3" cx="0.42" cy="0.33" r="0.7"><stop offset="0" stop-color="#b8f0ff"/><stop offset="0.35" stop-color="#4ab8ec"/><stop offset="1" stop-color="#1448a0"/></radialGradient>
<radialGradient id="gc3" cx="0.45" cy="0.35" r="0.75"><stop offset="0" stop-color="#d8f860"/><stop offset="0.6" stop-color="#a8d038"/><stop offset="1" stop-color="#7aa818"/></radialGradient>
<radialGradient id="gh3" cx="0.5" cy="0.5" r="0.5"><stop offset="0" stop-color="#ffffff" stop-opacity="0.75"/><stop offset="1" stop-color="#ffffff" stop-opacity="0"/></radialGradient>
<clipPath id="gcl3"><circle cx="12" cy="12" r="10.8"/></clipPath></defs>
<circle cx="12" cy="12" r="10.8" fill="url(#gg3)"/>
<g clip-path="url(#gcl3)" fill="url(#gc3)">
<path d="M11.5,2.5 L16,1 L20,3 L23,7 L23.5,10.8 L21,11.2 L18.5,10.6 L16,11.3 L14,10.6 L11,10.4 L9.6,8.2 L10.6,6.2 L12,5z"/>
<path d="M6,3.8 L9.8,1.6 L10,3 L7.5,4.8z"/>
<path d="M5.5,15.6 L5.8,14 L9.7,11.7 L13,12 L16.4,12.1 L19.3,13.2 L20.3,15.9 L18.3,19.8 L15.5,22.3 L13.1,23 L11.6,19.4 L6.8,17.9z"/>
</g>
<circle cx="9.7" cy="7.3" r="4" fill="url(#gh3)"/></svg>
<div style="left:2697.00px;top:69.60px;height:16px;line-height:16px;font-size:12px;color:#fff;white-space:pre;transform:scaleX(0.9155);transform-origin:0 0;">0 AV: 1 DV: 88 DD: 00:00:02 1 MIN VOLUME PROFILE</div>
<div style="left:2974.60px;top:69.60px;height:16px;line-height:16px;font-size:12px;color:#ff1c1c;white-space:pre;transform:scaleX(0.9833);transform-origin:0 0;">Point of Control: 15048</div>
<div style="left:3104.60px;top:69.60px;height:16px;line-height:16px;font-size:12px;color:#fff;white-space:pre;transform:scaleX(0.9468);transform-origin:0 0;">(Volume Profiles, 0, 2, Multiple Profiles Based On Fixed Time, No, Days, 1, 50, 1000000, 0, 0, No, 00:00:00, 0, 00:00:00, No, No, Period L</div>
<div style="left:3798.5px;top:72px;width:1px;height:931px;background:#fff;"></div>
<div style="left:1921px;top:1002px;width:1878.5px;height:1px;background:#fff;"></div>
<div style="left:3799.5px;top:109px;width:3px;height:1px;background:#fff;"></div>
<div style="left:3803.50px;top:100.70px;height:16px;line-height:16px;font-size:12px;color:#fff;white-space:pre;transform:scaleX(0.8691);transform-origin:0 0;">15086</div>
<div style="left:3799.5px;top:133px;width:3px;height:1px;background:#fff;"></div>
<div style="left:3803.50px;top:124.65px;height:16px;line-height:16px;font-size:12px;color:#fff;white-space:pre;transform:scaleX(0.8691);transform-origin:0 0;">15084</div>
<div style="left:3799.5px;top:157px;width:3px;height:1px;background:#fff;"></div>
<div style="left:3803.50px;top:148.60px;height:16px;line-height:16px;font-size:12px;color:#fff;white-space:pre;transform:scaleX(0.8691);transform-origin:0 0;">15082</div>
<div style="left:3799.5px;top:181px;width:3px;height:1px;background:#fff;"></div>
<div style="left:3803.50px;top:172.55px;height:16px;line-height:16px;font-size:12px;color:#fff;white-space:pre;transform:scaleX(0.8691);transform-origin:0 0;">15080</div>
<div style="left:3799.5px;top:204px;width:3px;height:1px;background:#fff;"></div>
<div style="left:3803.50px;top:196.50px;height:16px;line-height:16px;font-size:12px;color:#fff;white-space:pre;transform:scaleX(0.8691);transform-origin:0 0;">15078</div>
<div style="left:3799.5px;top:228px;width:3px;height:1px;background:#fff;"></div>
<div style="left:3803.50px;top:220.45px;height:16px;line-height:16px;font-size:12px;color:#fff;white-space:pre;transform:scaleX(0.8691);transform-origin:0 0;">15076</div>
<div style="left:3799.5px;top:252px;width:3px;height:1px;background:#fff;"></div>
<div style="left:3803.50px;top:244.40px;height:16px;line-height:16px;font-size:12px;color:#fff;white-space:pre;transform:scaleX(0.8691);transform-origin:0 0;">15074</div>
<div style="left:3799.5px;top:276px;width:3px;height:1px;background:#fff;"></div>
<div style="left:3803.50px;top:268.35px;height:16px;line-height:16px;font-size:12px;color:#fff;white-space:pre;transform:scaleX(0.8691);transform-origin:0 0;">15072</div>
<div style="left:3799.5px;top:300px;width:3px;height:1px;background:#fff;"></div>
<div style="left:3803.50px;top:292.30px;height:16px;line-height:16px;font-size:12px;color:#fff;white-space:pre;transform:scaleX(0.8691);transform-origin:0 0;">15070</div>
<div style="left:3799.5px;top:324px;width:3px;height:1px;background:#fff;"></div>
<div style="left:3803.50px;top:316.25px;height:16px;line-height:16px;font-size:12px;color:#fff;white-space:pre;transform:scaleX(0.8691);transform-origin:0 0;">15068</div>
<div style="left:3799.5px;top:348px;width:3px;height:1px;background:#fff;"></div>
<div style="left:3803.50px;top:340.20px;height:16px;line-height:16px;font-size:12px;color:#fff;white-space:pre;transform:scaleX(0.8691);transform-origin:0 0;">15066</div>
<div style="left:3799.5px;top:372px;width:3px;height:1px;background:#fff;"></div>
<div style="left:3803.50px;top:364.15px;height:16px;line-height:16px;font-size:12px;color:#fff;white-space:pre;transform:scaleX(0.8691);transform-origin:0 0;">15064</div>
<div style="left:3799.5px;top:396px;width:3px;height:1px;background:#fff;"></div>
<div style="left:3803.50px;top:388.10px;height:16px;line-height:16px;font-size:12px;color:#fff;white-space:pre;transform:scaleX(0.8691);transform-origin:0 0;">15062</div>
<div style="left:3799.5px;top:420px;width:3px;height:1px;background:#fff;"></div>
<div style="left:3803.50px;top:412.05px;height:16px;line-height:16px;font-size:12px;color:#fff;white-space:pre;transform:scaleX(0.8691);transform-origin:0 0;">15060</div>
<div style="left:3799.5px;top:444px;width:3px;height:1px;background:#fff;"></div>
<div style="left:3803.50px;top:436.00px;height:16px;line-height:16px;font-size:12px;color:#fff;white-space:pre;transform:scaleX(0.8691);transform-origin:0 0;">15058</div>
<div style="left:3799.5px;top:468px;width:3px;height:1px;background:#fff;"></div>
<div style="left:3803.50px;top:459.95px;height:16px;line-height:16px;font-size:12px;color:#fff;white-space:pre;transform:scaleX(0.8691);transform-origin:0 0;">15056</div>
<div style="left:3799.5px;top:492px;width:3px;height:1px;background:#fff;"></div>
<div style="left:3803.50px;top:483.90px;height:16px;line-height:16px;font-size:12px;color:#fff;white-space:pre;transform:scaleX(0.8691);transform-origin:0 0;">15054</div>
<div style="left:3799.5px;top:516px;width:3px;height:1px;background:#fff;"></div>
<div style="left:3803.50px;top:507.85px;height:16px;line-height:16px;font-size:12px;color:#fff;white-space:pre;transform:scaleX(0.8691);transform-origin:0 0;">15052</div>
<div style="left:3799.5px;top:540px;width:3px;height:1px;background:#fff;"></div>
<div style="left:3803.50px;top:531.80px;height:16px;line-height:16px;font-size:12px;color:#fff;white-space:pre;transform:scaleX(0.8691);transform-origin:0 0;">15050</div>
<div style="left:3799.5px;top:564px;width:3px;height:1px;background:#fff;"></div>
<div style="left:3803.50px;top:555.75px;height:16px;line-height:16px;font-size:12px;color:#fff;white-space:pre;transform:scaleX(0.8691);transform-origin:0 0;">15048</div>
<div style="left:3799.5px;top:588px;width:3px;height:1px;background:#fff;"></div>
<div style="left:3803.50px;top:579.70px;height:16px;line-height:16px;font-size:12px;color:#fff;white-space:pre;transform:scaleX(0.8691);transform-origin:0 0;">15046</div>
<div style="left:3799.5px;top:612px;width:3px;height:1px;background:#fff;"></div>
<div style="left:3803.50px;top:603.65px;height:16px;line-height:16px;font-size:12px;color:#fff;white-space:pre;transform:scaleX(0.8691);transform-origin:0 0;">15044</div>
<div style="left:3799.5px;top:636px;width:3px;height:1px;background:#fff;"></div>
<div style="left:3803.50px;top:627.60px;height:16px;line-height:16px;font-size:12px;color:#fff;white-space:pre;transform:scaleX(0.8691);transform-origin:0 0;">15042</div>
<div style="left:3799.5px;top:660px;width:3px;height:1px;background:#fff;"></div>
<div style="left:3803.50px;top:651.55px;height:16px;line-height:16px;font-size:12px;color:#fff;white-space:pre;transform:scaleX(0.8691);transform-origin:0 0;">15040</div>
<div style="left:3799.5px;top:684px;width:3px;height:1px;background:#fff;"></div>
<div style="left:3803.50px;top:675.50px;height:16px;line-height:16px;font-size:12px;color:#fff;white-space:pre;transform:scaleX(0.8691);transform-origin:0 0;">15038</div>
<div style="left:3799.5px;top:707px;width:3px;height:1px;background:#fff;"></div>
<div style="left:3803.50px;top:699.45px;height:16px;line-height:16px;font-size:12px;color:#fff;white-space:pre;transform:scaleX(0.8691);transform-origin:0 0;">15036</div>
<div style="left:3799.5px;top:731px;width:3px;height:1px;background:#fff;"></div>
<div style="left:3803.50px;top:723.40px;height:16px;line-height:16px;font-size:12px;color:#fff;white-space:pre;transform:scaleX(0.8691);transform-origin:0 0;">15034</div>
<div style="left:3799.5px;top:755px;width:3px;height:1px;background:#fff;"></div>
<div style="left:3803.50px;top:747.35px;height:16px;line-height:16px;font-size:12px;color:#fff;white-space:pre;transform:scaleX(0.8691);transform-origin:0 0;">15032</div>
<div style="left:3799.5px;top:779px;width:3px;height:1px;background:#fff;"></div>
<div style="left:3803.50px;top:771.30px;height:16px;line-height:16px;font-size:12px;color:#fff;white-space:pre;transform:scaleX(0.8691);transform-origin:0 0;">15030</div>
<div style="left:3799.5px;top:803px;width:3px;height:1px;background:#fff;"></div>
<div style="left:3803.50px;top:795.25px;height:16px;line-height:16px;font-size:12px;color:#fff;white-space:pre;transform:scaleX(0.8691);transform-origin:0 0;">15028</div>
<div style="left:3799.5px;top:827px;width:3px;height:1px;background:#fff;"></div>
<div style="left:3803.50px;top:819.20px;height:16px;line-height:16px;font-size:12px;color:#fff;white-space:pre;transform:scaleX(0.8691);transform-origin:0 0;">15026</div>
<div style="left:3799.5px;top:851px;width:3px;height:1px;background:#fff;"></div>
<div style="left:3803.50px;top:843.15px;height:16px;line-height:16px;font-size:12px;color:#fff;white-space:pre;transform:scaleX(0.8691);transform-origin:0 0;">15024</div>
<div style="left:3799.5px;top:875px;width:3px;height:1px;background:#fff;"></div>
<div style="left:3803.50px;top:867.10px;height:16px;line-height:16px;font-size:12px;color:#fff;white-space:pre;transform:scaleX(0.8691);transform-origin:0 0;">15022</div>
<div style="left:3799.5px;top:899px;width:3px;height:1px;background:#fff;"></div>
<div style="left:3803.50px;top:891.05px;height:16px;line-height:16px;font-size:12px;color:#fff;white-space:pre;transform:scaleX(0.8691);transform-origin:0 0;">15020</div>
<div style="left:3799.5px;top:923px;width:3px;height:1px;background:#fff;"></div>
<div style="left:3803.50px;top:915.00px;height:16px;line-height:16px;font-size:12px;color:#fff;white-space:pre;transform:scaleX(0.8691);transform-origin:0 0;">15018</div>
<div style="left:3799.5px;top:947px;width:3px;height:1px;background:#fff;"></div>
<div style="left:3803.50px;top:938.95px;height:16px;line-height:16px;font-size:12px;color:#fff;white-space:pre;transform:scaleX(0.8691);transform-origin:0 0;">15016</div>
<div style="left:3799.5px;top:971px;width:3px;height:1px;background:#fff;"></div>
<div style="left:3803.50px;top:962.90px;height:16px;line-height:16px;font-size:12px;color:#fff;white-space:pre;transform:scaleX(0.8691);transform-origin:0 0;">15014</div>
<div style="left:3799.5px;top:995px;width:3px;height:1px;background:#fff;"></div>
<div style="left:3803.50px;top:986.85px;height:16px;line-height:16px;font-size:12px;color:#fff;white-space:pre;transform:scaleX(0.8691);transform-origin:0 0;">15012</div>
<div style="left:3803.5px;top:70px;width:32px;height:9px;background:#fff;"></div>
<div style="left:3804.50px;top:64.50px;height:16px;line-height:16px;font-size:12px;color:#000;white-space:pre;transform:scaleX(0.8691);transform-origin:0 0;clip-path:inset(0 0 0 0);">15089</div>
<div style="left:3799.5px;top:70px;width:40px;height:1.5px;background:#fff;"></div>
<div style="left:1921px;top:719.5px;width:1877.5px;height:1px;background:repeating-linear-gradient(90deg,#fff 0 4px,transparent 4px 7px);"></div>
<div style="left:3802.5px;top:712px;width:34px;height:15px;background:#fff;"></div>
<div style="left:3804.50px;top:712.00px;height:16px;line-height:16px;font-size:12px;color:#000;white-space:pre;transform:scaleX(0.8691);transform-origin:0 0;">15035</div>
<div style="left:3746px;top:113px;width:34px;height:37px;background:#ff8000;"></div>
<div style="left:3749.50px;top:115.00px;height:34px;line-height:34px;font-size:26px;color:#000;white-space:pre;font-weight:700;transform:scaleX(0.9336);transform-origin:0 0;">17</div>
<div style="left:2719px;top:278px;width:281px;height:23px;background:#ffff00;"></div>
<div style="left:2726.50px;top:282.00px;height:16px;line-height:16px;font-size:12px;color:#2a1a00;white-space:pre;transform:scaleX(0.9841);transform-origin:0 0;">[Volume] Symbol needs Rollover. Click to Rollover.</div>
<div style="left:2218px;top:690px;width:1px;height:312px;background:#fff;"></div>
<div style="left:1927px;top:696px;width:15px;height:22px;background:#5a5000;"></div>
<div style="left:1957px;top:690px;width:3px;height:77px;background:#008a00;"></div>
<div style="left:1926px;top:707px;width:38px;height:1.5px;background:#ffff00;"></div>
<div style="left:1927px;top:720px;width:2px;height:22px;background:#006000;"></div>
<div style="left:1937px;top:720px;width:3px;height:12px;background:#008a00;"></div>
<div style="left:1925px;top:767px;width:40px;height:1.5px;background:#ff8080;"></div>
<div style="left:1928px;top:744px;width:3px;height:1px;background:#ff0000;"></div>
<div style="left:1927px;top:746px;width:1px;height:22px;background:#006000;"></div>
<div style="left:1927px;top:1003px;width:1px;height:3px;background:#fff;"></div>
<div style="left:1974px;top:1003px;width:1px;height:3px;background:#fff;"></div>
<div style="left:2006px;top:1003px;width:1px;height:3px;background:#fff;"></div>
<div style="left:2038px;top:1003px;width:1px;height:3px;background:#fff;"></div>
<div style="left:2070px;top:1003px;width:1px;height:3px;background:#fff;"></div>
<div style="left:2102px;top:1003px;width:1px;height:3px;background:#fff;"></div>
<div style="left:2134px;top:1003px;width:1px;height:3px;background:#fff;"></div>
<div style="left:2165px;top:1003px;width:1px;height:3px;background:#fff;"></div>
<div style="left:2197px;top:1003px;width:1px;height:3px;background:#fff;"></div>
<div style="left:2229px;top:1003px;width:1px;height:3px;background:#fff;"></div>
<div style="left:2261px;top:1003px;width:1px;height:3px;background:#fff;"></div>
<div style="left:2295px;top:1003px;width:1px;height:3px;background:#fff;"></div>
<div style="left:2326px;top:1003px;width:1px;height:3px;background:#fff;"></div>
<div style="left:2358px;top:1003px;width:1px;height:3px;background:#fff;"></div>
<div style="left:2390px;top:1003px;width:1px;height:3px;background:#fff;"></div>
<div style="left:2422px;top:1003px;width:1px;height:3px;background:#fff;"></div>
<div style="left:2454px;top:1003px;width:1px;height:3px;background:#fff;"></div>
<div style="left:2486px;top:1003px;width:1px;height:3px;background:#fff;"></div>
<div style="left:2518px;top:1003px;width:1px;height:3px;background:#fff;"></div>
<div style="left:2550px;top:1003px;width:1px;height:3px;background:#fff;"></div>
<div style="left:1921px;top:1005.4px;width:32px;height:16px;background:#fff;"></div>
<div style="left:1921.00px;top:1005.40px;height:16px;line-height:16px;font-size:12px;color:#000;white-space:pre;transform:scaleX(1.0709);transform-origin:0 0;">-3-17</div>
<div style="left:1964.50px;top:1005.40px;height:16px;line-height:16px;font-size:12px;color:#fff;white-space:pre;transform:scaleX(0.8991);transform-origin:0 0;">7:29</div>
<div style="left:1995.80px;top:1005.40px;height:16px;line-height:16px;font-size:12px;color:#fff;white-space:pre;transform:scaleX(0.8991);transform-origin:0 0;">7:37</div>
<div style="left:2027.80px;top:1005.40px;height:16px;line-height:16px;font-size:12px;color:#fff;white-space:pre;transform:scaleX(0.8991);transform-origin:0 0;">7:45</div>
<div style="left:2059.80px;top:1005.40px;height:16px;line-height:16px;font-size:12px;color:#fff;white-space:pre;transform:scaleX(0.8991);transform-origin:0 0;">7:53</div>
<div style="left:2091.80px;top:1005.40px;height:16px;line-height:16px;font-size:12px;color:#fff;white-space:pre;transform:scaleX(0.8991);transform-origin:0 0;">8:01</div>
<div style="left:2123.80px;top:1005.40px;height:16px;line-height:16px;font-size:12px;color:#fff;white-space:pre;transform:scaleX(0.8991);transform-origin:0 0;">8:09</div>
<div style="left:2284.30px;top:1005.40px;height:16px;line-height:16px;font-size:12px;color:#fff;white-space:pre;transform:scaleX(0.8991);transform-origin:0 0;">8:49</div>
<div style="left:2316.00px;top:1005.40px;height:16px;line-height:16px;font-size:12px;color:#fff;white-space:pre;transform:scaleX(0.8991);transform-origin:0 0;">8:57</div>
<div style="left:2348.00px;top:1005.40px;height:16px;line-height:16px;font-size:12px;color:#fff;white-space:pre;transform:scaleX(0.8991);transform-origin:0 0;">9:05</div>
<div style="left:2379.50px;top:1005.40px;height:16px;line-height:16px;font-size:12px;color:#fff;white-space:pre;transform:scaleX(0.8991);transform-origin:0 0;">9:13</div>
<div style="left:2411.50px;top:1005.40px;height:16px;line-height:16px;font-size:12px;color:#fff;white-space:pre;transform:scaleX(0.8991);transform-origin:0 0;">9:21</div>
<div style="left:2443.50px;top:1005.40px;height:16px;line-height:16px;font-size:12px;color:#fff;white-space:pre;transform:scaleX(0.8991);transform-origin:0 0;">9:29</div>
<div style="left:2475.50px;top:1005.40px;height:16px;line-height:16px;font-size:12px;color:#fff;white-space:pre;transform:scaleX(0.8991);transform-origin:0 0;">9:37</div>
<div style="left:2507.50px;top:1005.40px;height:16px;line-height:16px;font-size:12px;color:#fff;white-space:pre;transform:scaleX(0.8991);transform-origin:0 0;">9:45</div>
<div style="left:2539.90px;top:1005.40px;height:16px;line-height:16px;font-size:12px;color:#fff;white-space:pre;transform:scaleX(0.8991);transform-origin:0 0;">9:53</div>
<div style="left:2152.3px;top:1005.4px;width:131.7px;height:16px;background:#fff;"></div>
<div style="left:2157.00px;top:1005.40px;height:16px;line-height:16px;font-size:12px;color:#000;white-space:pre;transform:scaleX(0.9236);transform-origin:0 0;">Fri 2023-03-17  08:30:00</div>
<div style="left:3824px;top:1006px;width:14px;height:15px;background:#00c000;"></div>
<div style="left:3828.00px;top:1005.50px;height:16px;line-height:16px;font-size:12px;color:#fff;white-space:pre;transform:scaleX(0.8990);transform-origin:0 0;">3</div>
<div style="left:1921px;top:1022px;width:1917px;height:17px;background:#f0f0f0;"></div>
<svg style="left:1925.5px;top:1026px" width="7" height="9"><path d="M5,1 L1.5,4.5 L5,8" fill="none" stroke="#a8a8a8" stroke-width="1.6"/></svg>
<svg style="left:3826.5px;top:1026px" width="7" height="9"><path d="M1.5,1 L5,4.5 L1.5,8" fill="none" stroke="#a8a8a8" stroke-width="1.6"/></svg>
<div style="left:1920px;top:1039px;width:1919px;height:1px;background:#2b7fb0;"></div>
<div style="left:3838px;top:20px;width:2px;height:1020px;background:#0a48c0;"></div>
<div style="left:1927px;top:28px;width:769.5px;height:662px;background:transparent;box-shadow:0 4px 18px rgba(0,0,0,0.28);"></div>
<div style="left:1927px;top:28px;width:769.5px;height:662px;background:#f0f0f0;border:1px solid #707070;"></div>
<div style="left:1928px;top:29px;width:767.5px;height:67px;background:#fff;"></div>
<svg style="left:1936px;top:37px" width="16" height="14"><rect x="0.5" y="0.5" width="15" height="13" fill="#f4f4f4" stroke="#9a9a9a"/><rect x="3" y="3" width="5" height="8" fill="#3a8a6a"/><rect x="9" y="3" width="4" height="8" fill="#d0d0d0"/></svg>
<div style="left:1957.30px;top:36.00px;height:16px;line-height:16px;font-size:12.5px;color:#000;white-space:pre;transform:scaleX(0.9025);transform-origin:0 0;">Chart Settings | FDAXH23-EUREX[M]  1 Min   #5 | FUT ON DAX INDEX</div>
<div style="left:2577px;top:43.5px;width:10px;height:1px;background:#c8c8c8;"></div>
<svg style="left:2621px;top:37.5px" width="12" height="12"><rect x="1" y="1" width="10" height="10" fill="none" stroke="#111" stroke-width="1"/></svg>
<svg style="left:2667px;top:37.5px" width="12" height="12"><g stroke="#111" stroke-width="1"><line x1="0.8" y1="0.8" x2="11.2" y2="11.2"/><line x1="11.2" y1="0.8" x2="0.8" y2="11.2"/></g></svg>
<div style="left:1934.90px;top:60.80px;height:16px;line-height:16px;font-size:12.5px;color:#000;white-space:pre;transform:scaleX(0.9707);transform-origin:0 0;">[Symbol]</div>
<div style="left:1997.00px;top:60.80px;height:16px;line-height:16px;font-size:12.5px;color:#000;white-space:pre;transform:scaleX(0.9800);transform-origin:0 0;">[Data Limiting]</div>
<div style="left:2090.20px;top:60.80px;height:16px;line-height:16px;font-size:12.5px;color:#000;white-space:pre;transform:scaleX(0.9318);transform-origin:0 0;">[Bar Period]</div>
<div style="left:2166.00px;top:60.80px;height:16px;line-height:16px;font-size:12.5px;color:#000;white-space:pre;transform:scaleX(0.9101);transform-origin:0 0;">[Session Times]</div>
<div style="left:2261.00px;top:60.80px;height:16px;line-height:16px;font-size:12.5px;color:#000;white-space:pre;transform:scaleX(0.9535);transform-origin:0 0;">[Display]</div>
<div style="left:2321.00px;top:60.80px;height:16px;line-height:16px;font-size:12.5px;color:#000;white-space:pre;transform:scaleX(0.9686);transform-origin:0 0;">[Grid]</div>
<div style="left:2365.00px;top:60.80px;height:16px;line-height:16px;font-size:12.5px;color:#000;white-space:pre;transform:scaleX(0.9537);transform-origin:0 0;">[Trading]</div>
<div style="left:2426.00px;top:60.80px;height:16px;line-height:16px;font-size:12.5px;color:#000;white-space:pre;transform:scaleX(1.0052);transform-origin:0 0;">[Linking]</div>
<div style="left:2487.00px;top:60.80px;height:16px;line-height:16px;font-size:12.5px;color:#000;white-space:pre;transform:scaleX(0.9054);transform-origin:0 0;">[Scale]</div>
<div style="left:2536.50px;top:60.80px;height:16px;line-height:16px;font-size:12.5px;color:#000;white-space:pre;transform:scaleX(0.9279);transform-origin:0 0;">[Regions]</div>
<div style="left:2600.00px;top:60.80px;height:16px;line-height:16px;font-size:12.5px;color:#000;white-space:pre;transform:scaleX(0.9759);transform-origin:0 0;">[Market Depth]</div>
<div style="left:1934.90px;top:79.70px;height:16px;line-height:16px;font-size:12.5px;color:#000;white-space:pre;transform:scaleX(0.9576);transform-origin:0 0;">[*Chart Drawings]</div>
<div style="left:2043.00px;top:79.70px;height:16px;line-height:16px;font-size:12.5px;color:#000;white-space:pre;transform:scaleX(0.9453);transform-origin:0 0;">[Chart Data]</div>
<div style="left:2121.00px;top:79.70px;height:16px;line-height:16px;font-size:12.5px;color:#000;white-space:pre;transform:scaleX(0.9630);transform-origin:0 0;">[Performance]</div>
<div style="left:2211.00px;top:79.70px;height:16px;line-height:16px;font-size:12.5px;color:#000;white-space:pre;">[Alert]</div>
<div style="left:2258.00px;top:79.70px;height:16px;line-height:16px;font-size:12.5px;color:#000;white-space:pre;transform:scaleX(0.9305);transform-origin:0 0;">View</div>
<div style="left:1938.6px;top:99px;width:745.6px;height:20px;background:#fff;border-top:2px solid #6a6a6a;border-left:2px solid #6a6a6a;border-bottom:1px solid #e3e3e3;border-right:1px solid #e3e3e3;"></div>
<div style="left:1944.20px;top:101.00px;height:16px;line-height:16px;font-size:12.5px;color:#000;white-space:pre;transform:scaleX(0.8877);transform-origin:0 0;">Enter Search Text</div>
<div style="left:2667px;top:101px;width:17px;height:17px;background:#f0f0f0;border-right:2px solid #6a6a6a;border-bottom:2px solid #6a6a6a;border-left:1px solid #fff;border-top:1px solid #fff;"></div>
<svg style="left:2671px;top:106px" width="10" height="6"><path d="M0,0 h9 l-4.5,5z" fill="#000"/></svg>
<div style="left:1938.6px;top:128.4px;width:746.8px;height:520.6px;background:#000;border:1px solid #6a6a6a;border-top:2px solid #6a6a6a;"></div>
<div style="left:1939.6px;top:130.4px;width:744.8px;height:24.1px;background:#f0f0f0;"></div>
<div style="left:2408px;top:130.4px;width:1px;height:24.1px;background:#a0a0a0;"></div>
<div style="left:1944.20px;top:133.70px;height:16px;line-height:16px;font-size:12.5px;color:#000;white-space:pre;transform:scaleX(0.9441);transform-origin:0 0;">Setting Name</div>
<div style="left:2413.00px;top:133.70px;height:16px;line-height:16px;font-size:12.5px;color:#000;white-space:pre;transform:scaleX(0.9020);transform-origin:0 0;">Value</div>
<div style="left:1939.6px;top:154px;width:744.8px;height:1px;background:#a0a0a0;"></div>
<div style="left:1939.6px;top:173px;width:744.8px;height:1px;background:#a0a0a0;"></div>
<div style="left:1939.6px;top:192px;width:744.8px;height:1px;background:#a0a0a0;"></div>
<div style="left:1939.6px;top:211px;width:744.8px;height:1px;background:#a0a0a0;"></div>
<div style="left:1939.6px;top:230px;width:744.8px;height:1px;background:#a0a0a0;"></div>
<div style="left:1939.6px;top:249px;width:744.8px;height:1px;background:#a0a0a0;"></div>
<div style="left:1939.6px;top:268px;width:744.8px;height:1px;background:#a0a0a0;"></div>
<div style="left:1939.6px;top:287px;width:744.8px;height:1px;background:#a0a0a0;"></div>
<div style="left:1939.6px;top:306px;width:744.8px;height:1px;background:#a0a0a0;"></div>
<div style="left:1939.6px;top:325px;width:744.8px;height:1px;background:#a0a0a0;"></div>
<div style="left:1939.6px;top:344px;width:744.8px;height:1px;background:#a0a0a0;"></div>
<div style="left:1939.6px;top:363px;width:744.8px;height:1px;background:#a0a0a0;"></div>
<div style="left:1939.6px;top:382px;width:744.8px;height:1px;background:#a0a0a0;"></div>
<div style="left:1939.6px;top:401px;width:744.8px;height:1px;background:#a0a0a0;"></div>
<div style="left:2408px;top:154px;width:1px;height:19px;background:#a0a0a0;"></div>
<div style="left:2408px;top:173px;width:1px;height:19px;background:#a0a0a0;"></div>
<div style="left:2408px;top:192px;width:1px;height:19px;background:#a0a0a0;"></div>
<div style="left:2408px;top:211px;width:1px;height:19px;background:#a0a0a0;"></div>
<div style="left:2408px;top:230px;width:1px;height:19px;background:#a0a0a0;"></div>
<div style="left:2408px;top:249px;width:1px;height:19px;background:#a0a0a0;"></div>
<div style="left:2408px;top:268px;width:1px;height:19px;background:#a0a0a0;"></div>
<div style="left:2408px;top:287px;width:1px;height:19px;background:#a0a0a0;"></div>
<div style="left:2408px;top:306px;width:1px;height:19px;background:#a0a0a0;"></div>
<div style="left:2408px;top:325px;width:1px;height:19px;background:#a0a0a0;"></div>
<div style="left:2408px;top:344px;width:1px;height:19px;background:#a0a0a0;"></div>
<div style="left:2408px;top:363px;width:1px;height:19px;background:#a0a0a0;"></div>
<div style="left:2408px;top:382px;width:1px;height:19px;background:#a0a0a0;"></div>
<div style="left:1942.40px;top:156.45px;height:16px;line-height:16px;font-size:12.5px;color:#fff;white-space:pre;transform:scaleX(0.9461);transform-origin:0 0;">Draw Highlight Drawings Underneath Main Graph and Studies</div>
<div style="left:2411.30px;top:156.45px;height:16px;line-height:16px;font-size:12.5px;color:#00e000;white-space:pre;transform:scaleX(0.8091);transform-origin:0 0;">Yes</div>
<div style="left:1942.40px;top:175.40px;height:16px;line-height:16px;font-size:12.5px;color:#fff;white-space:pre;transform:scaleX(0.9525);transform-origin:0 0;">Draw Non-Highlight Drawings Underneath Main Graph and Studies</div>
<div style="left:2411.30px;top:175.40px;height:16px;line-height:16px;font-size:12.5px;color:#fff;white-space:pre;transform:scaleX(0.9700);transform-origin:0 0;">No</div>
<div style="left:1942.40px;top:194.35px;height:16px;line-height:16px;font-size:12.5px;color:#fff;white-space:pre;transform:scaleX(0.9414);transform-origin:0 0;">Draw Advanced Custom Study Drawings Above Other Drawings</div>
<div style="left:2411.30px;top:194.35px;height:16px;line-height:16px;font-size:12.5px;color:#fff;white-space:pre;transform:scaleX(0.9700);transform-origin:0 0;">No</div>
<div style="left:1942.40px;top:213.25px;height:16px;line-height:16px;font-size:12.5px;color:#fff;white-space:pre;transform:scaleX(0.9179);transform-origin:0 0;">Adjust Tool Values to Tick Size</div>
<div style="left:2411.30px;top:213.25px;height:16px;line-height:16px;font-size:12.5px;color:#00e000;white-space:pre;transform:scaleX(0.8091);transform-origin:0 0;">Yes</div>
<div style="left:1942.40px;top:251.15px;height:16px;line-height:16px;font-size:12.5px;color:#fff;white-space:pre;transform:scaleX(0.9412);transform-origin:0 0;">Copy Chart Drawings From Chart #&#x27;s</div>
<div style="left:2411.30px;top:251.15px;height:16px;line-height:16px;font-size:12.5px;color:#fff;white-space:pre;transform:scaleX(0.8489);transform-origin:0 0;">1,2,4</div>
<div style="left:1942.40px;top:270.10px;height:16px;line-height:16px;font-size:12.5px;color:#fff;white-space:pre;transform:scaleX(0.9337);transform-origin:0 0;">Hide/Disable User Drawn Chart Drawings From Other Charts</div>
<div style="left:2411.30px;top:270.10px;height:16px;line-height:16px;font-size:12.5px;color:#fff;white-space:pre;transform:scaleX(0.9700);transform-origin:0 0;">No</div>
<div style="left:1942.40px;top:289.05px;height:16px;line-height:16px;font-size:12.5px;color:#fff;white-space:pre;transform:scaleX(0.9451);transform-origin:0 0;">Show Chart Drawings for Different Symbols</div>
<div style="left:2411.30px;top:289.05px;height:16px;line-height:16px;font-size:12.5px;color:#00e000;white-space:pre;transform:scaleX(0.8091);transform-origin:0 0;">Yes</div>
<div style="left:1942.40px;top:308.00px;height:16px;line-height:16px;font-size:12.5px;color:#fff;white-space:pre;transform:scaleX(0.9421);transform-origin:0 0;">Show Hidden Drawings</div>
<div style="left:2411.30px;top:308.00px;height:16px;line-height:16px;font-size:12.5px;color:#00e000;white-space:pre;transform:scaleX(0.8091);transform-origin:0 0;">Yes</div>
<div style="left:1942.40px;top:345.90px;height:16px;line-height:16px;font-size:12.5px;color:#fff;white-space:pre;transform:scaleX(0.9689);transform-origin:0 0;">Allow Modification of Chart Drawings from Other Charts</div>
<div style="left:2411.30px;top:345.90px;height:16px;line-height:16px;font-size:12.5px;color:#00e000;white-space:pre;transform:scaleX(0.8091);transform-origin:0 0;">Yes</div>
<div style="left:1942.40px;top:383.80px;height:16px;line-height:16px;font-size:12.5px;color:#fff;white-space:pre;transform:scaleX(0.9183);transform-origin:0 0;">Value Increment Per Bar in Ticks</div>
<div style="left:2411.30px;top:383.80px;height:16px;line-height:16px;font-size:12.5px;color:#fff;white-space:pre;transform:scaleX(0.7192);transform-origin:0 0;">1</div>
<div style="left:1938.6px;top:650px;width:147.4px;height:29.5px;background:#f0f0f0;border-top:1px solid #fff;border-left:1px solid #fff;border-right:1px solid #6a6a6a;border-bottom:1px solid #6a6a6a;box-shadow:inset -1px -1px 0 #a0a0a0;"></div>
<div style="left:2087px;top:650px;width:148px;height:29.5px;background:#f0f0f0;border-top:1px solid #fff;border-left:1px solid #fff;border-right:1px solid #6a6a6a;border-bottom:1px solid #6a6a6a;box-shadow:inset -1px -1px 0 #a0a0a0;"></div>
<div style="left:2236px;top:650px;width:148px;height:29.5px;background:#f0f0f0;border-top:1px solid #fff;border-left:1px solid #fff;border-right:1px solid #6a6a6a;border-bottom:1px solid #6a6a6a;box-shadow:inset -1px -1px 0 #a0a0a0;"></div>
<div style="left:2385px;top:650px;width:148px;height:29.5px;background:#f0f0f0;border-top:1px solid #fff;border-left:1px solid #fff;border-right:1px solid #6a6a6a;border-bottom:1px solid #6a6a6a;box-shadow:inset -1px -1px 0 #a0a0a0;"></div>
<div style="left:2534px;top:650px;width:148px;height:29.5px;background:#f0f0f0;border-top:1px solid #fff;border-left:1px solid #fff;border-right:1px solid #6a6a6a;border-bottom:1px solid #6a6a6a;box-shadow:inset -1px -1px 0 #a0a0a0;"></div>
<div style="left:2005.00px;top:657.00px;height:16px;line-height:16px;font-size:12.5px;color:#000;white-space:pre;transform:scaleX(0.7752);transform-origin:0 0;">OK</div>
<div style="left:2143.50px;top:657.00px;height:16px;line-height:16px;font-size:12.5px;color:#000;white-space:pre;transform:scaleX(0.8995);transform-origin:0 0;">Cancel</div>
<div style="left:2297.50px;top:657.00px;height:16px;line-height:16px;font-size:12.5px;color:#000;white-space:pre;transform:scaleX(0.9725);transform-origin:0 0;">Help</div>
<div style="left:2433.70px;top:657.00px;height:16px;line-height:16px;font-size:12.5px;color:#000;white-space:pre;transform:scaleX(0.9339);transform-origin:0 0;">Revert All</div>
<div style="left:2584.00px;top:657.00px;height:16px;line-height:16px;font-size:12.5px;color:#000;white-space:pre;transform:scaleX(0.9870);transform-origin:0 0;">Apply All</div>
<div style="left:1920px;top:1040px;width:1920px;height:40px;background:linear-gradient(90deg,#243b45 0%,#22343f 45%,#1e2d42 70%,#1a2442 100%);"></div>
<div style="left:1968px;top:1040px;width:288px;height:40px;background:#f0f0f0;"></div>
<svg style="left:1935.5px;top:1051.5px" width="17.0" height="17.0" viewBox="0 0 17 17"><g fill="#fff">
<polygon points="0,2.3 7,1.3 7,8 0,8"/>
<polygon points="8,1.2 17,0 17,8 8,8"/>
<polygon points="0,9 7,9 7,15.7 0,14.7"/>
<polygon points="8,9 17,9 17,17 8,15.8"/>
</g></svg>
<svg style="left:1979px;top:1051px" width="18" height="18" viewBox="0 0 18 18"><g fill="none" stroke="#222" stroke-width="1.4"><circle cx="11.5" cy="7.5" r="5.3"/><line x1="7.8" y1="11.3" x2="1.5" y2="17.5"/></g></svg>
<div style="left:2008.50px;top:1050.60px;height:20px;line-height:20px;font-size:15px;color:#2a2a2a;white-space:pre;transform:scaleX(0.9617);transform-origin:0 0;">Type here to search</div>
<svg style="left:2184px;top:1043px" width="62" height="37" viewBox="0 0 62 37"><circle cx="10.0" cy="9.3" r="5.3" fill="#5aaa38"/><circle cx="8.6" cy="17.6" r="5.3" fill="#5aaa38"/><polygon points="15.8,14.6 10.9,4.6 7.7,22.3" fill="#5aaa38"/><circle cx="22.8" cy="11.0" r="5.3" fill="#4a9a22"/><circle cx="15.4" cy="6.8" r="5.3" fill="#4a9a22"/><polygon points="15.8,14.6 26.9,13.4 11.3,4.4" fill="#4a9a22"/><circle cx="16.1" cy="22.4" r="5.3" fill="#4e9e26"/><circle cx="23.1" cy="17.6" r="5.3" fill="#4e9e26"/><polygon points="15.8,14.6 12.2,25.2 27.0,14.8" fill="#4e9e26"/><circle cx="43.6" cy="8.3" r="4.3" fill="#58a834"/><circle cx="38.6" cy="13.3" r="4.3" fill="#58a834"/><polygon points="44.9,14.6 46.3,5.5 35.8,16.0" fill="#58a834"/><circle cx="50.3" cy="18.1" r="4.3" fill="#5aaa34"/><circle cx="50.3" cy="11.1" r="4.3" fill="#5aaa34"/><polygon points="44.9,14.6 50.3,22.0 50.3,7.2" fill="#5aaa34"/><circle cx="40.5" cy="19.3" r="4.3" fill="#60ae3a"/><circle cx="47.4" cy="20.5" r="4.3" fill="#60ae3a"/><polygon points="44.9,14.6 36.7,18.6 51.3,21.2" fill="#60ae3a"/><path d="M23,23 Q29,29 30,37 M42,18 Q31,25 30,37" stroke="#8ab030" stroke-width="1.3" fill="none"/></svg>
<div style="left:2700px;top:1040px;width:43.5px;height:40px;background:rgba(255,255,255,0.16);"></div>
<div style="left:2700px;top:1078px;width:43.5px;height:2px;background:#76b9ed;"></div>
<div style="left:2605px;top:1078px;width:40px;height:2px;background:#76b9ed;"></div>
<svg style="left:2270.6px;top:1051px" width="19" height="18" viewBox="0 0 19 18"><g fill="none" stroke="#fff" stroke-width="1.3">
<rect x="2.5" y="5" width="11" height="8"/>
<line x1="1" y1="1.5" x2="14" y2="1.5"/><line x1="1" y1="16.5" x2="14" y2="16.5"/>
<line x1="17" y1="1" x2="17" y2="4"/><line x1="17" y1="6.5" x2="17" y2="17"/>
</g></svg>
<svg style="left:2318px;top:1049px" width="24" height="21" viewBox="0 0 24 21"><path d="M1,3 h8 l2,2 h12 v14 h-22 z" fill="#e8b320"/>
<rect x="1" y="7" width="22" height="12" fill="#ffd35c"/>
<path d="M7,19 v-5 h10 v5 h-3 v-2 h-4 v2 z" fill="#3e8ee0"/></svg>
<svg style="left:2367.6px;top:1048px" width="24" height="24" viewBox="0 0 24 24"><path d="M7,6 v-3 a2,2 0 0 1 2,-2 h6 a2,2 0 0 1 2,2 v3" fill="none" stroke="#2a9be8" stroke-width="1.8"/>
<rect x="1" y="5" width="22" height="18" rx="3" fill="#f4f4f4"/>
<rect x="1" y="18" width="22" height="5" rx="2" fill="#d8d8d8"/>
<rect x="7.5" y="9" width="4" height="4" fill="#f35325"/><rect x="12.5" y="9" width="4" height="4" fill="#81bc06"/>
<rect x="7.5" y="14" width="4" height="4" fill="#05a6f0"/><rect x="12.5" y="14" width="4" height="4" fill="#ffba08"/></svg>
<svg style="left:2417px;top:1049px" width="24" height="23" viewBox="0 0 24 23"><path d="M1,8 l11,-7 l11,7 v13 h-22 z" fill="#0a5fbf"/>
<path d="M3,8 h18 v6 l-9,5 l-9,-5 z" fill="#fff"/>
<path d="M1,8 l11,7 l11,-7 v14 h-22 z" fill="#1e9be8"/>
<path d="M1,22 l11,-8 l11,8 z" fill="#2ab0f5"/></svg>
<svg style="left:2467px;top:1049px" width="24" height="23" viewBox="0 0 24 23"><ellipse cx="11" cy="10" rx="10" ry="7" fill="#f2f2f2" stroke="#e03a3a" stroke-width="2" transform="rotate(-20 11 10)"/>
<ellipse cx="9" cy="15" rx="7" ry="3" fill="#9a9a9a" opacity="0.8"/>
<line x1="11" y1="2" x2="14" y2="17" stroke="#666" stroke-width="1"/>
<circle cx="13" cy="19" r="2.4" fill="none" stroke="#2a8be0" stroke-width="1.6"/>
<circle cx="19" cy="18" r="2.4" fill="none" stroke="#2a8be0" stroke-width="1.6"/></svg>
<svg style="left:2514.5px;top:1048px" width="24" height="24" viewBox="0 0 24 24"><rect x="0" y="0" width="24" height="24" fill="#131722"/>
<path d="M3,8 h7 v8 h-3 v-5 h-4 z" fill="#fff"/><circle cx="12.5" cy="9.5" r="1.6" fill="#fff"/>
<path d="M13,16 l4,-8 h4 l-4,8 z" fill="#fff"/></svg>
<svg style="left:2564px;top:1048px" width="24" height="24" viewBox="0 0 24 24"><defs><linearGradient id="eg2a" x1="0" y1="0.2" x2="1" y2="0.6"><stop offset="0" stop-color="#35c4f4"/><stop offset="0.5" stop-color="#2cc4c8"/><stop offset="1" stop-color="#6ae858"/></linearGradient>
<linearGradient id="eg2b" x1="0" y1="0" x2="0.2" y2="1"><stop offset="0" stop-color="#1290e0"/><stop offset="1" stop-color="#0878d8"/></linearGradient>
<clipPath id="ec2"><circle cx="12" cy="12" r="11.8"/></clipPath></defs>
<g clip-path="url(#ec2)">
<rect x="0" y="0" width="24" height="24" fill="url(#eg2a)"/>
<path d="M-1,11 Q3,6.5 8,6.8 Q12.5,7.2 14.5,10.5 Q11,10 9.5,13 Q8.5,17 11,20.5 Q13,24.5 17,25 L-1,25z" fill="url(#eg2b)"/>
<path d="M14.5,10.5 Q11,10 9.5,13 Q8.5,17 11,20.5 Q13,24.5 17,25 L25,25 L25,18.6 Q21,20.2 18.5,20 Q13.8,19.5 12.2,15.5 Q11.6,12.5 14.5,10.5z" fill="#0e54a4"/>
<path d="M12.2,15.5 Q11.6,12 14,11.3 Q16,11 16.4,13 Q16.2,14.5 15.5,15.2 Q16.5,17.5 19.5,18 Q22,18.3 25,17.8 L25,18.6 Q21,20.2 18.5,20 Q13.8,19.5 12.2,15.5z" fill="#22343f"/>
</g></svg>
<svg style="left:2613px;top:1048px" width="24" height="24" viewBox="0 0 24 24"><defs><linearGradient id="opg" x1="0" y1="0" x2="1" y2="1"><stop offset="0" stop-color="#ff1b2d"/><stop offset="1" stop-color="#c8101e"/></linearGradient></defs>
<ellipse cx="12" cy="12" rx="10.8" ry="11.2" fill="url(#opg)"/>
<ellipse cx="12" cy="12" rx="4.6" ry="8.4" fill="#22343f"/></svg>
<svg style="left:2662px;top:1048px" width="24" height="24" viewBox="0 0 24 24"><defs><radialGradient id="org" cx="0.65" cy="0.35" r="0.75"><stop offset="0" stop-color="#ffb000"/><stop offset="1" stop-color="#ff7a00"/></radialGradient></defs>
<circle cx="12" cy="12" r="12" fill="url(#org)"/>
<rect x="7.6" y="5.4" width="9.2" height="2.6" rx="1.3" fill="#fff"/>
<rect x="4.3" y="10.7" width="8.4" height="2.6" rx="1.3" fill="#fff"/>
<rect x="7.2" y="16.5" width="9.6" height="2.6" rx="1.3" fill="#fff"/></svg>
<svg style="left:2710px;top:1048px" width="24" height="24" viewBox="0 0 24 24"><defs><radialGradient id="gg4" cx="0.42" cy="0.33" r="0.7"><stop offset="0" stop-color="#b8f0ff"/><stop offset="0.35" stop-color="#4ab8ec"/><stop offset="1" stop-color="#1448a0"/></radialGradient>
<radialGradient id="gc4" cx="0.45" cy="0.35" r="0.75"><stop offset="0" stop-color="#d8f860"/><stop offset="0.6" stop-color="#a8d038"/><stop offset="1" stop-color="#7aa818"/></radialGradient>
<radialGradient id="gh4" cx="0.5" cy="0.5" r="0.5"><stop offset="0" stop-color="#ffffff" stop-opacity="0.75"/><stop offset="1" stop-color="#ffffff" stop-opacity="0"/></radialGradient>
<clipPath id="gcl4"><circle cx="12" cy="12" r="10.8"/></clipPath></defs>
<circle cx="12" cy="12" r="10.8" fill="url(#gg4)"/>
<g clip-path="url(#gcl4)" fill="url(#gc4)">
<path d="M11.5,2.5 L16,1 L20,3 L23,7 L23.5,10.8 L21,11.2 L18.5,10.6 L16,11.3 L14,10.6 L11,10.4 L9.6,8.2 L10.6,6.2 L12,5z"/>
<path d="M6,3.8 L9.8,1.6 L10,3 L7.5,4.8z"/>
<path d="M5.5,15.6 L5.8,14 L9.7,11.7 L13,12 L16.4,12.1 L19.3,13.2 L20.3,15.9 L18.3,19.8 L15.5,22.3 L13.1,23 L11.6,19.4 L6.8,17.9z"/>
</g>
<circle cx="9.7" cy="7.3" r="4" fill="url(#gh4)"/></svg>
<svg style="left:3627px;top:1054px" width="13" height="8"><path d="M0.5,7 L6.5,1 L12.5,7" fill="none" stroke="#fff" stroke-width="1.2"/></svg>
<svg style="left:3651px;top:1051px" width="13" height="17"><g fill="none" stroke="#fff" stroke-width="1.1"><rect x="1" y="5" width="7" height="7" rx="2"/><path d="M8,7 l3,-2 v7 l-3,-2"/><path d="M2,2 a6,6 0 0 1 8,0 M2,15 a6,6 0 0 0 8,0"/></g></svg>
<svg style="left:3673px;top:1053px" width="17" height="15"><g fill="none" stroke="#fff" stroke-width="1.1"><rect x="4" y="1" width="12" height="9"/><rect x="1" y="1" width="4" height="3"/><line x1="10" y1="10" x2="10" y2="13"/><line x1="6" y1="13.5" x2="14" y2="13.5"/><line x1="3" y1="4" x2="3" y2="13"/></g></svg>
<svg style="left:3697px;top:1052px" width="17" height="15"><g fill="none" stroke="#fff" stroke-width="1.1"><path d="M1,5 h3 l4,-4 v13 l-4,-4 h-3z"/><path d="M10,5 a3,3 0 0 1 0,5 M12,3 a5,5 0 0 1 0,9 M14,1 a7,7 0 0 1 0,13"/></g></svg>
<div style="left:3737.25px;top:1042.00px;height:16px;line-height:16px;font-size:12px;color:#fff;white-space:pre;transform:scaleX(0.9158);transform-origin:0 0;">07:29</div>
<div style="left:3722.50px;top:1060.00px;height:16px;line-height:16px;font-size:12px;color:#fff;white-space:pre;transform:scaleX(0.9491);transform-origin:0 0;">17/03/2023</div>
<svg style="left:3798px;top:1051px" width="24" height="22"><path d="M1,1 h16 v11 h-12 l-4,4z" fill="#fff"/><circle cx="16" cy="15" r="7" fill="#2a2a2a" stroke="#666"/><text x="16" y="19" font-size="10" font-weight="700" fill="#fff" text-anchor="middle" font-family="Liberation Sans">2</text></svg>
<div style="left:3835px;top:1041px;width:1px;height:38px;background:#6a7a8a;"></div>
<div style="left:0px;top:1090.5px;width:930px;height:50.5px;background:#fff;"></div>
<div style="left:0px;top:1141px;width:1px;height:990px;background:#7ab8d8;"></div>
<svg style="left:9.36364px;top:1097.86px" width="15.2727" height="15.2727" viewBox="0 0 24 24"><defs><radialGradient id="gg5" cx="0.42" cy="0.33" r="0.7"><stop offset="0" stop-color="#b8f0ff"/><stop offset="0.35" stop-color="#4ab8ec"/><stop offset="1" stop-color="#1448a0"/></radialGradient>
<radialGradient id="gc5" cx="0.45" cy="0.35" r="0.75"><stop offset="0" stop-color="#d8f860"/><stop offset="0.6" stop-color="#a8d038"/><stop offset="1" stop-color="#7aa818"/></radialGradient>
<radialGradient id="gh5" cx="0.5" cy="0.5" r="0.5"><stop offset="0" stop-color="#ffffff" stop-opacity="0.75"/><stop offset="1" stop-color="#ffffff" stop-opacity="0"/></radialGradient>
<clipPath id="gcl5"><circle cx="12" cy="12" r="10.8"/></clipPath></defs>
<circle cx="12" cy="12" r="10.8" fill="url(#gg5)"/>
<g clip-path="url(#gcl5)" fill="url(#gc5)">
<path d="M11.5,2.5 L16,1 L20,3 L23,7 L23.5,10.8 L21,11.2 L18.5,10.6 L16,11.3 L14,10.6 L11,10.4 L9.6,8.2 L10.6,6.2 L12,5z"/>
<path d="M6,3.8 L9.8,1.6 L10,3 L7.5,4.8z"/>
<path d="M5.5,15.6 L5.8,14 L9.7,11.7 L13,12 L16.4,12.1 L19.3,13.2 L20.3,15.9 L18.3,19.8 L15.5,22.3 L13.1,23 L11.6,19.4 L6.8,17.9z"/>
</g>
<circle cx="9.7" cy="7.3" r="4" fill="url(#gh5)"/></svg>
<div style="left:30.30px;top:1098.00px;height:16px;line-height:16px;font-size:12.5px;color:#9a9a9a;white-space:pre;transform:scaleX(0.8934);transform-origin:0 0;">FDAXM23-EUREX[M]  #1 | FUT ON DAX INDEX (Jun23) (FDAXM23-EUREX[M]  #1 - Period: 1 Days, TPOs: 2 x 30 min  )</div>
<div style="left:810px;top:1105px;width:10px;height:1px;background:#8a8a8a;"></div>
<svg style="left:854px;top:1099px" width="12" height="12"><rect x="1" y="1" width="10" height="10" fill="none" stroke="#8a8a8a" stroke-width="1"/></svg>
<svg style="left:900px;top:1099px" width="12" height="12"><g stroke="#8a8a8a" stroke-width="1"><line x1="0.8" y1="0.8" x2="11.2" y2="11.2"/><line x1="11.2" y1="0.8" x2="0.8" y2="11.2"/></g></svg>
<div style="left:8.10px;top:1123.00px;height:16px;line-height:16px;font-size:12px;color:#707070;white-space:pre;transform:scaleX(0.9624);transform-origin:0 0;">Edit</div>
<div style="left:42.40px;top:1123.00px;height:16px;line-height:16px;font-size:12px;color:#707070;white-space:pre;transform:scaleX(0.9712);transform-origin:0 0;">Chart</div>
<div style="left:85.20px;top:1123.00px;height:16px;line-height:16px;font-size:12px;color:#707070;white-space:pre;transform:scaleX(0.9578);transform-origin:0 0;">Analysis</div>
<div style="left:142.60px;top:1123.00px;height:16px;line-height:16px;font-size:12px;color:#707070;white-space:pre;transform:scaleX(0.9424);transform-origin:0 0;">Tools</div>
<div style="left:183.60px;top:1123.00px;height:16px;line-height:16px;font-size:12px;color:#707070;white-space:pre;transform:scaleX(0.8867);transform-origin:0 0;">Trade</div>
<div style="left:225.50px;top:1123.00px;height:16px;line-height:16px;font-size:12px;color:#707070;white-space:pre;transform:scaleX(1.0192);transform-origin:0 0;">Window</div>
<div style="left:283.30px;top:1123.00px;height:16px;line-height:16px;font-size:12px;color:#707070;white-space:pre;transform:scaleX(0.8578);transform-origin:0 0;">CB</div>
<div style="left:312.50px;top:1123.00px;height:16px;line-height:16px;font-size:12px;color:#707070;white-space:pre;transform:scaleX(0.9154);transform-origin:0 0;">CW</div>
<div style="left:345.30px;top:1123.00px;height:16px;line-height:16px;font-size:12px;color:#707070;white-space:pre;">Help</div>
<div style="left:1px;top:1140.5px;width:928px;height:1px;background:#ececec;"></div>
<div style="left:1px;top:1141px;width:928px;height:971px;background:#000;"></div>
<div style="left:6.20px;top:1141.00px;height:16px;line-height:16px;font-size:12px;color:#fff;white-space:pre;transform:scaleX(0.9393);transform-origin:0 0;">FDAXM23-EUREX[M]  #1 - Period: 1 Days, TPOs: 2 x 30 min</div>
<div style="left:321px;top:1142px;width:45.5px;height:14px;background:#fff;"></div>
<div style="left:323.00px;top:1141.00px;height:16px;line-height:16px;font-size:12px;color:#000;white-space:pre;transform:scaleX(0.8829);transform-origin:0 0;">C: 15206</div>
<div style="left:369.50px;top:1141.00px;height:16px;line-height:16px;font-size:12px;color:#fff;white-space:pre;transform:scaleX(0.8871);transform-origin:0 0;">T: 673</div>
<div style="left:400.7px;top:1142px;width:35.8px;height:14px;background:#fff;"></div>
<div style="left:402.00px;top:1141.00px;height:16px;line-height:16px;font-size:12px;color:#000;white-space:pre;transform:scaleX(0.9475);transform-origin:0 0;">Chg: 0</div>
<div style="left:437.8px;top:1142px;width:48.7px;height:14px;background:#ff0000;"></div>
<div style="left:438.60px;top:1141.00px;height:16px;line-height:16px;font-size:12px;color:#5a0000;white-space:pre;transform:scaleX(0.9892);transform-origin:0 0;">DChg: -5</div>
<div style="left:489.00px;top:1141.00px;height:16px;line-height:16px;font-size:12px;color:#fff;white-space:pre;transform:scaleX(0.9093);transform-origin:0 0;">2023-03-17 07:29:21 H: 15220 L: 15197 O: 15212 V: 768 B: 15205 A: 15207 3x3 TR</div>
<div style="left:888.5px;top:1141px;width:40px;height:16px;background:#000;"></div>
<div style="left:873px;top:1141px;width:1px;height:951px;background:#fff;"></div>
<div style="left:889.5px;top:1141px;width:1px;height:951px;background:#fff;"></div>
<div style="left:2px;top:1268.3px;width:888px;height:1px;background:#fff;"></div>
<div style="left:890.5px;top:1165px;width:3px;height:1px;background:#fff;"></div>
<div style="left:894.00px;top:1156.80px;height:16px;line-height:16px;font-size:12px;color:#fff;white-space:pre;transform:scaleX(0.8691);transform-origin:0 0;">15240</div>
<div style="left:890.5px;top:1207px;width:3px;height:1px;background:#fff;"></div>
<div style="left:894.00px;top:1198.55px;height:16px;line-height:16px;font-size:12px;color:#fff;white-space:pre;transform:scaleX(0.8691);transform-origin:0 0;">15236</div>
<div style="left:890.5px;top:1248px;width:3px;height:1px;background:#fff;"></div>
<div style="left:894.00px;top:1240.30px;height:16px;line-height:16px;font-size:12px;color:#fff;white-space:pre;transform:scaleX(0.8691);transform-origin:0 0;">15232</div>
<div style="left:890.5px;top:1290px;width:3px;height:1px;background:#fff;"></div>
<div style="left:894.00px;top:1282.05px;height:16px;line-height:16px;font-size:12px;color:#fff;white-space:pre;transform:scaleX(0.8691);transform-origin:0 0;">15228</div>
<div style="left:890.5px;top:1332px;width:3px;height:1px;background:#fff;"></div>
<div style="left:894.00px;top:1323.80px;height:16px;line-height:16px;font-size:12px;color:#fff;white-space:pre;transform:scaleX(0.8691);transform-origin:0 0;">15224</div>
<div style="left:890.5px;top:1374px;width:3px;height:1px;background:#fff;"></div>
<div style="left:894.00px;top:1365.55px;height:16px;line-height:16px;font-size:12px;color:#fff;white-space:pre;transform:scaleX(0.8691);transform-origin:0 0;">15220</div>
<div style="left:890.5px;top:1415px;width:3px;height:1px;background:#fff;"></div>
<div style="left:894.00px;top:1407.30px;height:16px;line-height:16px;font-size:12px;color:#fff;white-space:pre;transform:scaleX(0.8691);transform-origin:0 0;">15216</div>
<div style="left:890.5px;top:1457px;width:3px;height:1px;background:#fff;"></div>
<div style="left:894.00px;top:1449.05px;height:16px;line-height:16px;font-size:12px;color:#fff;white-space:pre;transform:scaleX(0.8691);transform-origin:0 0;">15212</div>
<div style="left:890.5px;top:1499px;width:3px;height:1px;background:#fff;"></div>
<div style="left:894.00px;top:1490.80px;height:16px;line-height:16px;font-size:12px;color:#fff;white-space:pre;transform:scaleX(0.8691);transform-origin:0 0;">15208</div>
<div style="left:890.5px;top:1541px;width:3px;height:1px;background:#fff;"></div>
<div style="left:894.00px;top:1532.55px;height:16px;line-height:16px;font-size:12px;color:#fff;white-space:pre;transform:scaleX(0.8691);transform-origin:0 0;">15204</div>
<div style="left:890.5px;top:1582px;width:3px;height:1px;background:#fff;"></div>
<div style="left:894.00px;top:1574.30px;height:16px;line-height:16px;font-size:12px;color:#fff;white-space:pre;transform:scaleX(0.8691);transform-origin:0 0;">15200</div>
<div style="left:890.5px;top:1624px;width:3px;height:1px;background:#fff;"></div>
<div style="left:894.00px;top:1616.05px;height:16px;line-height:16px;font-size:12px;color:#fff;white-space:pre;transform:scaleX(0.8691);transform-origin:0 0;">15196</div>
<div style="left:890.5px;top:1666px;width:3px;height:1px;background:#fff;"></div>
<div style="left:894.00px;top:1657.80px;height:16px;line-height:16px;font-size:12px;color:#fff;white-space:pre;transform:scaleX(0.8691);transform-origin:0 0;">15192</div>
<div style="left:890.5px;top:1708px;width:3px;height:1px;background:#fff;"></div>
<div style="left:894.00px;top:1699.55px;height:16px;line-height:16px;font-size:12px;color:#fff;white-space:pre;transform:scaleX(0.8691);transform-origin:0 0;">15188</div>
<div style="left:890.5px;top:1749px;width:3px;height:1px;background:#fff;"></div>
<div style="left:894.00px;top:1741.30px;height:16px;line-height:16px;font-size:12px;color:#fff;white-space:pre;transform:scaleX(0.8691);transform-origin:0 0;">15184</div>
<div style="left:890.5px;top:1791px;width:3px;height:1px;background:#fff;"></div>
<div style="left:894.00px;top:1783.05px;height:16px;line-height:16px;font-size:12px;color:#fff;white-space:pre;transform:scaleX(0.8691);transform-origin:0 0;">15180</div>
<div style="left:890.5px;top:1833px;width:3px;height:1px;background:#fff;"></div>
<div style="left:894.00px;top:1824.80px;height:16px;line-height:16px;font-size:12px;color:#fff;white-space:pre;transform:scaleX(0.8691);transform-origin:0 0;">15176</div>
<div style="left:890.5px;top:1875px;width:3px;height:1px;background:#fff;"></div>
<div style="left:894.00px;top:1866.55px;height:16px;line-height:16px;font-size:12px;color:#fff;white-space:pre;transform:scaleX(0.8691);transform-origin:0 0;">15172</div>
<div style="left:890.5px;top:1916px;width:3px;height:1px;background:#fff;"></div>
<div style="left:894.00px;top:1908.30px;height:16px;line-height:16px;font-size:12px;color:#fff;white-space:pre;transform:scaleX(0.8691);transform-origin:0 0;">15168</div>
<div style="left:890.5px;top:1958px;width:3px;height:1px;background:#fff;"></div>
<div style="left:894.00px;top:1950.05px;height:16px;line-height:16px;font-size:12px;color:#fff;white-space:pre;transform:scaleX(0.8691);transform-origin:0 0;">15164</div>
<div style="left:890.5px;top:2000px;width:3px;height:1px;background:#fff;"></div>
<div style="left:894.00px;top:1991.80px;height:16px;line-height:16px;font-size:12px;color:#fff;white-space:pre;transform:scaleX(0.8691);transform-origin:0 0;">15160</div>
<div style="left:890.5px;top:2042px;width:3px;height:1px;background:#fff;"></div>
<div style="left:894.00px;top:2033.55px;height:16px;line-height:16px;font-size:12px;color:#fff;white-space:pre;transform:scaleX(0.8691);transform-origin:0 0;">15156</div>
<div style="left:890.5px;top:2083px;width:3px;height:1px;background:#fff;"></div>
<div style="left:894.00px;top:2075.30px;height:16px;line-height:16px;font-size:12px;color:#fff;white-space:pre;transform:scaleX(0.8691);transform-origin:0 0;">15152</div>
<div style="left:893px;top:1261px;width:34px;height:15px;background:#fff;"></div>
<div style="left:894.50px;top:1260.50px;height:16px;line-height:16px;font-size:12px;color:#000;white-space:pre;transform:scaleX(0.8691);transform-origin:0 0;">15230</div>
<div style="left:2px;top:1519.4px;width:885px;height:1px;background:repeating-linear-gradient(90deg,#fff 0 4px,transparent 4px 7px);"></div>
<div style="left:893px;top:1512.5px;width:34px;height:15px;background:#fff;"></div>
<div style="left:894.50px;top:1512.00px;height:16px;line-height:16px;font-size:12px;color:#000;white-space:pre;transform:scaleX(0.8691);transform-origin:0 0;">15206</div>
<div style="left:2px;top:2008.5px;width:885px;height:1.2px;background:#00a000;"></div>
<div style="left:9px;top:1362px;width:3px;height:251px;background:#00ffff;"></div>
<div style="left:15px;top:1363.7px;width:7px;height:17.2px;background:#00e000;"></div>
<div style="left:61px;top:1363.7px;width:1px;height:17.2px;background:#00e000;"></div>
<div style="left:15px;top:1384.7px;width:7px;height:17.9px;background:#c0c0c0;"></div>
<div style="left:55px;top:1384.7px;width:7px;height:17.9px;background:#00e000;"></div>
<div style="left:15px;top:1406px;width:7px;height:17.9px;background:#c0c0c0;"></div>
<div style="left:50px;top:1406px;width:12px;height:17.9px;background:#00e000;"></div>
<div style="left:15px;top:1427px;width:7px;height:17.8px;background:#c0c0c0;"></div>
<div style="left:50px;top:1427px;width:12px;height:17.8px;background:#00e000;"></div>
<div style="left:15px;top:1448px;width:7px;height:17.5px;background:#ff8000;"></div>
<div style="left:56px;top:1448px;width:6px;height:17.5px;background:#00e000;"></div>
<div style="left:15px;top:1468.9px;width:7px;height:17.1px;background:#ff00ff;"></div>
<div style="left:58px;top:1468.9px;width:4px;height:17.1px;background:#fff;"></div>
<div style="left:15px;top:1489.5px;width:7px;height:17.2px;background:#c0c0c0;"></div>
<div style="left:45px;top:1489.5px;width:17px;height:17.2px;background:#fff;"></div>
<div style="left:15px;top:1510px;width:7px;height:18px;background:#c0c0c0;"></div>
<div style="left:36px;top:1510px;width:27px;height:18px;background:#ff0000;"></div>
<div style="left:15px;top:1531.4px;width:7px;height:17.3px;background:#c0c0c0;"></div>
<div style="left:47px;top:1531.4px;width:15px;height:17.3px;background:#fff;"></div>
<div style="left:15px;top:1552px;width:7px;height:18px;background:#c0c0c0;"></div>
<div style="left:41px;top:1552px;width:21px;height:18px;background:#fff;"></div>
<div style="left:15px;top:1573.4px;width:7px;height:17.1px;background:#00e000;"></div>
<div style="left:42px;top:1573.4px;width:20px;height:17.1px;background:#fff;"></div>
<div style="left:15px;top:1594px;width:7px;height:17.2px;background:#00e000;"></div>
<div style="left:56px;top:1594px;width:6px;height:17.2px;background:#fff;"></div>
<svg style="left:27px;top:1510px" width="10" height="18"><path d="M9,0 L1,9 L9,18z" fill="#ff0000" stroke="#800" stroke-width="0.6"/></svg>
<div style="left:2px;top:2092px;width:888px;height:1px;background:#fff;"></div>
<div style="left:9px;top:2093px;width:1px;height:18px;background:#fff;"></div>
<div style="left:12px;top:2096.4px;width:81px;height:14.6px;background:#fff;"></div>
<div style="left:13.50px;top:2095.70px;height:16px;line-height:16px;font-size:12px;color:#000;white-space:pre;transform:scaleX(0.9205);transform-origin:0 0;">2023-3-17  7:00</div>
<div style="left:807px;top:2097.4px;width:122px;height:12.6px;background:#fff;"></div>
<div style="left:812.00px;top:2095.70px;height:16px;line-height:16px;font-size:12px;color:#000;white-space:pre;transform:scaleX(1.0047);transform-origin:0 0;">Fri 2023-03-17  07:01:3</div>
<div style="left:929px;top:2093px;width:4px;height:19px;background:#000;"></div>
<div style="left:1px;top:2112px;width:928px;height:17px;background:#f0f0f0;"></div>
<svg style="left:4.5px;top:2116px" width="7" height="9"><path d="M5,1 L1.5,4.5 L5,8" fill="none" stroke="#a8a8a8" stroke-width="1.6"/></svg>
<svg style="left:917px;top:2116px" width="7" height="9"><path d="M1.5,1 L5,4.5 L1.5,8" fill="none" stroke="#a8a8a8" stroke-width="1.6"/></svg>
<div style="left:931px;top:1090.5px;width:989px;height:50.5px;background:#fff;"></div>
<svg style="left:940.364px;top:1097.86px" width="15.2727" height="15.2727" viewBox="0 0 24 24"><defs><radialGradient id="gg6" cx="0.42" cy="0.33" r="0.7"><stop offset="0" stop-color="#b8f0ff"/><stop offset="0.35" stop-color="#4ab8ec"/><stop offset="1" stop-color="#1448a0"/></radialGradient>
<radialGradient id="gc6" cx="0.45" cy="0.35" r="0.75"><stop offset="0" stop-color="#d8f860"/><stop offset="0.6" stop-color="#a8d038"/><stop offset="1" stop-color="#7aa818"/></radialGradient>
<radialGradient id="gh6" cx="0.5" cy="0.5" r="0.5"><stop offset="0" stop-color="#ffffff" stop-opacity="0.75"/><stop offset="1" stop-color="#ffffff" stop-opacity="0"/></radialGradient>
<clipPath id="gcl6"><circle cx="12" cy="12" r="10.8"/></clipPath></defs>
<circle cx="12" cy="12" r="10.8" fill="url(#gg6)"/>
<g clip-path="url(#gcl6)" fill="url(#gc6)">
<path d="M11.5,2.5 L16,1 L20,3 L23,7 L23.5,10.8 L21,11.2 L18.5,10.6 L16,11.3 L14,10.6 L11,10.4 L9.6,8.2 L10.6,6.2 L12,5z"/>
<path d="M6,3.8 L9.8,1.6 L10,3 L7.5,4.8z"/>
<path d="M5.5,15.6 L5.8,14 L9.7,11.7 L13,12 L16.4,12.1 L19.3,13.2 L20.3,15.9 L18.3,19.8 L15.5,22.3 L13.1,23 L11.6,19.4 L6.8,17.9z"/>
</g>
<circle cx="9.7" cy="7.3" r="4" fill="url(#gh6)"/></svg>
<div style="left:961.50px;top:1098.00px;height:16px;line-height:16px;font-size:12.5px;color:#9a9a9a;white-space:pre;transform:scaleX(0.8945);transform-origin:0 0;">FDAXM23-EUREX[M]  30 Min   #4 | FUT ON DAX INDEX (Jun23)</div>
<div style="left:1800px;top:1105px;width:10px;height:1px;background:#8a8a8a;"></div>
<svg style="left:1844px;top:1099px" width="12" height="12"><rect x="1" y="1" width="10" height="10" fill="none" stroke="#8a8a8a" stroke-width="1"/></svg>
<svg style="left:1890px;top:1099px" width="12" height="12"><g stroke="#8a8a8a" stroke-width="1"><line x1="0.8" y1="0.8" x2="11.2" y2="11.2"/><line x1="11.2" y1="0.8" x2="0.8" y2="11.2"/></g></svg>
<div style="left:939.10px;top:1123.00px;height:16px;line-height:16px;font-size:12px;color:#707070;white-space:pre;transform:scaleX(0.9624);transform-origin:0 0;">Edit</div>
<div style="left:973.40px;top:1123.00px;height:16px;line-height:16px;font-size:12px;color:#707070;white-space:pre;transform:scaleX(0.9712);transform-origin:0 0;">Chart</div>
<div style="left:1016.20px;top:1123.00px;height:16px;line-height:16px;font-size:12px;color:#707070;white-space:pre;transform:scaleX(0.9578);transform-origin:0 0;">Analysis</div>
<div style="left:1073.60px;top:1123.00px;height:16px;line-height:16px;font-size:12px;color:#707070;white-space:pre;transform:scaleX(0.9424);transform-origin:0 0;">Tools</div>
<div style="left:1114.60px;top:1123.00px;height:16px;line-height:16px;font-size:12px;color:#707070;white-space:pre;transform:scaleX(0.8867);transform-origin:0 0;">Trade</div>
<div style="left:1156.50px;top:1123.00px;height:16px;line-height:16px;font-size:12px;color:#707070;white-space:pre;transform:scaleX(1.0192);transform-origin:0 0;">Window</div>
<div style="left:1214.30px;top:1123.00px;height:16px;line-height:16px;font-size:12px;color:#707070;white-space:pre;transform:scaleX(0.8578);transform-origin:0 0;">CB</div>
<div style="left:1243.50px;top:1123.00px;height:16px;line-height:16px;font-size:12px;color:#707070;white-space:pre;transform:scaleX(0.9154);transform-origin:0 0;">CW</div>
<div style="left:1276.30px;top:1123.00px;height:16px;line-height:16px;font-size:12px;color:#707070;white-space:pre;">Help</div>
<div style="left:932px;top:1140.5px;width:988px;height:1px;background:#ececec;"></div>
<div style="left:932px;top:1141px;width:988px;height:971px;background:#000;"></div>
<div style="left:938.40px;top:1141.00px;height:16px;line-height:16px;font-size:12px;color:#fff;white-space:pre;transform:scaleX(0.9271);transform-origin:0 0;">FDAXM23-EUREX[M]</div>
<div style="left:1053.50px;top:1141.00px;height:16px;line-height:16px;font-size:12px;color:#fff;white-space:pre;transform:scaleX(0.9856);transform-origin:0 0;">30 Min</div>
<div style="left:1098.30px;top:1141.00px;height:16px;line-height:16px;font-size:12px;color:#fff;white-space:pre;transform:scaleX(0.9515);transform-origin:0 0;">#4</div>
<div style="left:1113px;top:1142px;width:46px;height:14px;background:#fff;"></div>
<div style="left:1115.50px;top:1141.00px;height:16px;line-height:16px;font-size:12px;color:#000;white-space:pre;transform:scaleX(0.8829);transform-origin:0 0;">C: 15206</div>
<div style="left:1162.00px;top:1141.00px;height:16px;line-height:16px;font-size:12px;color:#fff;white-space:pre;transform:scaleX(0.8871);transform-origin:0 0;">T: 673</div>
<div style="left:1193.5px;top:1142px;width:36px;height:14px;background:#fff;"></div>
<div style="left:1195.00px;top:1141.00px;height:16px;line-height:16px;font-size:12px;color:#000;white-space:pre;transform:scaleX(0.9475);transform-origin:0 0;">Chg: 0</div>
<div style="left:1230.2px;top:1142px;width:49.3px;height:14px;background:#ff0000;"></div>
<div style="left:1231.00px;top:1141.00px;height:16px;line-height:16px;font-size:12px;color:#5a0000;white-space:pre;transform:scaleX(0.9892);transform-origin:0 0;">DChg: -5</div>
<div style="left:1281.50px;top:1141.00px;height:16px;line-height:16px;font-size:12px;color:#fff;white-space:pre;transform:scaleX(0.9093);transform-origin:0 0;">2023-03-17 07:29:21 H: 15220 L: 15197 O: 15212 V: 768 B: 15205 A: 15207 3x3 TR: 39s BV: 422 AV: 346 DV: 2205 DD: 00:00</div>
<div style="left:1879.6px;top:1141px;width:41px;height:16px;background:#000;"></div>
<div style="left:1879.6px;top:1141px;width:1px;height:952px;background:#fff;"></div>
<div style="left:933.3px;top:1141px;width:1px;height:951px;background:#fff;"></div>
<div style="left:939.3px;top:1141px;width:1px;height:951px;background:#fff;"></div>
<div style="left:1880.6px;top:1170px;width:3px;height:1px;background:#fff;"></div>
<div style="left:1884.60px;top:1161.60px;height:16px;line-height:16px;font-size:12px;color:#fff;white-space:pre;transform:scaleX(0.8691);transform-origin:0 0;">15252</div>
<div style="left:1880.6px;top:1212px;width:3px;height:1px;background:#fff;"></div>
<div style="left:1884.60px;top:1204.17px;height:16px;line-height:16px;font-size:12px;color:#fff;white-space:pre;transform:scaleX(0.8691);transform-origin:0 0;">15248</div>
<div style="left:1880.6px;top:1255px;width:3px;height:1px;background:#fff;"></div>
<div style="left:1884.60px;top:1246.74px;height:16px;line-height:16px;font-size:12px;color:#fff;white-space:pre;transform:scaleX(0.8691);transform-origin:0 0;">15244</div>
<div style="left:1880.6px;top:1297px;width:3px;height:1px;background:#fff;"></div>
<div style="left:1884.60px;top:1289.31px;height:16px;line-height:16px;font-size:12px;color:#fff;white-space:pre;transform:scaleX(0.8691);transform-origin:0 0;">15240</div>
<div style="left:1880.6px;top:1340px;width:3px;height:1px;background:#fff;"></div>
<div style="left:1884.60px;top:1331.88px;height:16px;line-height:16px;font-size:12px;color:#fff;white-space:pre;transform:scaleX(0.8691);transform-origin:0 0;">15236</div>
<div style="left:1880.6px;top:1382px;width:3px;height:1px;background:#fff;"></div>
<div style="left:1884.60px;top:1374.45px;height:16px;line-height:16px;font-size:12px;color:#fff;white-space:pre;transform:scaleX(0.8691);transform-origin:0 0;">15232</div>
<div style="left:1880.6px;top:1425px;width:3px;height:1px;background:#fff;"></div>
<div style="left:1884.60px;top:1417.02px;height:16px;line-height:16px;font-size:12px;color:#fff;white-space:pre;transform:scaleX(0.8691);transform-origin:0 0;">15228</div>
<div style="left:1880.6px;top:1468px;width:3px;height:1px;background:#fff;"></div>
<div style="left:1884.60px;top:1459.59px;height:16px;line-height:16px;font-size:12px;color:#fff;white-space:pre;transform:scaleX(0.8691);transform-origin:0 0;">15224</div>
<div style="left:1880.6px;top:1510px;width:3px;height:1px;background:#fff;"></div>
<div style="left:1884.60px;top:1502.16px;height:16px;line-height:16px;font-size:12px;color:#fff;white-space:pre;transform:scaleX(0.8691);transform-origin:0 0;">15220</div>
<div style="left:1880.6px;top:1553px;width:3px;height:1px;background:#fff;"></div>
<div style="left:1884.60px;top:1544.73px;height:16px;line-height:16px;font-size:12px;color:#fff;white-space:pre;transform:scaleX(0.8691);transform-origin:0 0;">15216</div>
<div style="left:1880.6px;top:1595px;width:3px;height:1px;background:#fff;"></div>
<div style="left:1884.60px;top:1587.30px;height:16px;line-height:16px;font-size:12px;color:#fff;white-space:pre;transform:scaleX(0.8691);transform-origin:0 0;">15212</div>
<div style="left:1880.6px;top:1638px;width:3px;height:1px;background:#fff;"></div>
<div style="left:1884.60px;top:1629.87px;height:16px;line-height:16px;font-size:12px;color:#fff;white-space:pre;transform:scaleX(0.8691);transform-origin:0 0;">15208</div>
<div style="left:1880.6px;top:1680px;width:3px;height:1px;background:#fff;"></div>
<div style="left:1884.60px;top:1672.44px;height:16px;line-height:16px;font-size:12px;color:#fff;white-space:pre;transform:scaleX(0.8691);transform-origin:0 0;">15204</div>
<div style="left:1880.6px;top:1723px;width:3px;height:1px;background:#fff;"></div>
<div style="left:1884.60px;top:1715.01px;height:16px;line-height:16px;font-size:12px;color:#fff;white-space:pre;transform:scaleX(0.8691);transform-origin:0 0;">15200</div>
<div style="left:1880.6px;top:1766px;width:3px;height:1px;background:#fff;"></div>
<div style="left:1884.60px;top:1757.58px;height:16px;line-height:16px;font-size:12px;color:#fff;white-space:pre;transform:scaleX(0.8691);transform-origin:0 0;">15196</div>
<div style="left:1880.6px;top:1808px;width:3px;height:1px;background:#fff;"></div>
<div style="left:1884.60px;top:1800.15px;height:16px;line-height:16px;font-size:12px;color:#fff;white-space:pre;transform:scaleX(0.8691);transform-origin:0 0;">15192</div>
<div style="left:1880.6px;top:1851px;width:3px;height:1px;background:#fff;"></div>
<div style="left:1884.60px;top:1842.72px;height:16px;line-height:16px;font-size:12px;color:#fff;white-space:pre;transform:scaleX(0.8691);transform-origin:0 0;">15188</div>
<div style="left:1880.6px;top:1893px;width:3px;height:1px;background:#fff;"></div>
<div style="left:1884.60px;top:1885.29px;height:16px;line-height:16px;font-size:12px;color:#fff;white-space:pre;transform:scaleX(0.8691);transform-origin:0 0;">15184</div>
<div style="left:1880.6px;top:1936px;width:3px;height:1px;background:#fff;"></div>
<div style="left:1884.60px;top:1927.86px;height:16px;line-height:16px;font-size:12px;color:#fff;white-space:pre;transform:scaleX(0.8691);transform-origin:0 0;">15180</div>
<div style="left:1880.6px;top:1978px;width:3px;height:1px;background:#fff;"></div>
<div style="left:1884.60px;top:1970.43px;height:16px;line-height:16px;font-size:12px;color:#fff;white-space:pre;transform:scaleX(0.8691);transform-origin:0 0;">15176</div>
<div style="left:1880.6px;top:2021px;width:3px;height:1px;background:#fff;"></div>
<div style="left:1884.60px;top:2013.00px;height:16px;line-height:16px;font-size:12px;color:#fff;white-space:pre;transform:scaleX(0.8691);transform-origin:0 0;">15172</div>
<div style="left:1880.6px;top:2064px;width:3px;height:1px;background:#fff;"></div>
<div style="left:1884.60px;top:2055.57px;height:16px;line-height:16px;font-size:12px;color:#fff;white-space:pre;transform:scaleX(0.8691);transform-origin:0 0;">15168</div>
<div style="left:933px;top:1403.2px;width:947px;height:1px;background:#fff;"></div>
<div style="left:1883.6px;top:1396px;width:34px;height:15px;background:#fff;"></div>
<div style="left:1885.10px;top:1395.50px;height:16px;line-height:16px;font-size:12px;color:#000;white-space:pre;transform:scaleX(0.8691);transform-origin:0 0;">15230</div>
<div style="left:933px;top:1658.8px;width:946.6px;height:1px;background:repeating-linear-gradient(90deg,#fff 0 4px,transparent 4px 7px);"></div>
<div style="left:1883.6px;top:1651.5px;width:34px;height:15px;background:#fff;"></div>
<div style="left:1885.10px;top:1651.00px;height:16px;line-height:16px;font-size:12px;color:#000;white-space:pre;transform:scaleX(0.8691);transform-origin:0 0;">15206</div>
<div style="left:1789px;top:1165px;width:34px;height:36.5px;background:#ff8000;"></div>
<div style="left:1792.50px;top:1166.50px;height:34px;line-height:34px;font-size:26px;color:#000;white-space:pre;font-weight:700;transform:scaleX(0.9336);transform-origin:0 0;">17</div>
<div style="left:937px;top:1506px;width:1.3px;height:30px;background:#00d000;"></div>
<div style="left:937px;top:1537px;width:1.3px;height:30px;background:#00d000;"></div>
<div style="left:937px;top:1568px;width:1.3px;height:30px;background:#00d000;"></div>
<div style="left:937px;top:1600px;width:1.3px;height:31px;background:#fff;"></div>
<div style="left:937px;top:1632px;width:1.3px;height:30px;background:#fff;"></div>
<div style="left:937px;top:1696px;width:1.3px;height:31px;background:#fff;"></div>
<div style="left:937px;top:1728px;width:1.3px;height:32px;background:#fff;"></div>
<div style="left:937px;top:1761px;width:1.3px;height:29px;background:#fff;"></div>
<div style="left:936px;top:1663px;width:3px;height:32px;background:#ff0000;"></div>
<div style="left:1px;top:2092.3px;width:0px;height:0px;background:#fff;"></div>
<div style="left:933px;top:2092.3px;width:946.6px;height:1px;background:#fff;"></div>
<div style="left:936px;top:2093px;width:1px;height:3px;background:#fff;"></div>
<div style="left:983px;top:2093px;width:1px;height:3px;background:#fff;"></div>
<div style="left:1014px;top:2093px;width:1px;height:3px;background:#fff;"></div>
<div style="left:1046px;top:2093px;width:1px;height:3px;background:#fff;"></div>
<div style="left:1078px;top:2093px;width:1px;height:3px;background:#fff;"></div>
<div style="left:932px;top:2097.4px;width:72.7px;height:12.6px;background:#fff;"></div>
<div style="left:932.50px;top:2095.70px;height:16px;line-height:16px;font-size:12px;color:#000;white-space:pre;transform:scaleX(0.9044);transform-origin:0 0;">3-17  08:30:00</div>
<div style="left:1006px;top:2096.4px;width:21px;height:14.6px;background:#fff;"></div>
<div style="left:1006.50px;top:2095.70px;height:16px;line-height:16px;font-size:12px;color:#000;white-space:pre;transform:scaleX(0.8744);transform-origin:0 0;">3-19</div>
<div style="left:1034px;top:2096.4px;width:25px;height:14.6px;background:#fff;"></div>
<div style="left:1035.00px;top:2095.70px;height:16px;line-height:16px;font-size:12px;color:#000;white-space:pre;transform:scaleX(0.9576);transform-origin:0 0;">3-20</div>
<div style="left:1066px;top:2096.4px;width:25px;height:14.6px;background:#fff;"></div>
<div style="left:1067.00px;top:2095.70px;height:16px;line-height:16px;font-size:12px;color:#000;white-space:pre;transform:scaleX(0.9576);transform-origin:0 0;">3-22</div>
<div style="left:1905px;top:2096px;width:13px;height:15px;background:#00c000;"></div>
<div style="left:1908.50px;top:2095.50px;height:16px;line-height:16px;font-size:12px;color:#fff;white-space:pre;transform:scaleX(0.8990);transform-origin:0 0;">0</div>
<div style="left:932px;top:2112px;width:988px;height:17px;background:#f0f0f0;"></div>
<svg style="left:936.5px;top:2116px" width="7" height="9"><path d="M5,1 L1.5,4.5 L5,8" fill="none" stroke="#a8a8a8" stroke-width="1.6"/></svg>
<svg style="left:1907.5px;top:2116px" width="7" height="9"><path d="M1.5,1 L5,4.5 L1.5,8" fill="none" stroke="#a8a8a8" stroke-width="1.6"/></svg>
<div style="left:929px;top:1090.5px;width:3.5px;height:1040px;background:#2a6fae;"></div>
<div style="left:0px;top:2129px;width:1920px;height:1px;background:#2a6fae;"></div>
<div style="left:1919px;top:1141px;width:1px;height:989px;background:#2a6fae;"></div>
<div style="left:0px;top:2130px;width:1920px;height:40px;background:linear-gradient(90deg,#243b45 0%,#22343f 55%,#1c2744 100%);"></div>
<div style="left:539px;top:2130px;width:47px;height:40px;background:rgba(255,255,255,0.16);"></div>
<div style="left:539px;top:2168px;width:47px;height:2px;background:#76b9ed;"></div>
<div style="left:586px;top:2130px;width:1.5px;height:40px;background:rgba(255,255,255,0.10);"></div>
<div style="left:445px;top:2168px;width:40px;height:2px;background:#76b9ed;"></div>
<svg style="left:15.5px;top:2141.5px" width="17.0" height="17.0" viewBox="0 0 17 17"><g fill="#fff">
<polygon points="0,2.3 7,1.3 7,8 0,8"/>
<polygon points="8,1.2 17,0 17,8 8,8"/>
<polygon points="0,9 7,9 7,15.7 0,14.7"/>
<polygon points="8,9 17,9 17,17 8,15.8"/>
</g></svg>
<svg style="left:63px;top:2141px" width="18" height="18" viewBox="0 0 18 18"><g fill="none" stroke="#fff" stroke-width="1.4"><circle cx="11.5" cy="7.5" r="5.3"/><line x1="7.8" y1="11.3" x2="1.5" y2="17.5"/></g></svg>
<svg style="left:111px;top:2141px" width="19" height="18" viewBox="0 0 19 18"><g fill="none" stroke="#fff" stroke-width="1.3">
<rect x="2.5" y="5" width="11" height="8"/>
<line x1="1" y1="1.5" x2="14" y2="1.5"/><line x1="1" y1="16.5" x2="14" y2="16.5"/>
<line x1="17" y1="1" x2="17" y2="4"/><line x1="17" y1="6.5" x2="17" y2="17"/>
</g></svg>
<svg style="left:158.5px;top:2139px" width="24" height="21" viewBox="0 0 24 21"><path d="M1,3 h8 l2,2 h12 v14 h-22 z" fill="#e8b320"/>
<rect x="1" y="7" width="22" height="12" fill="#ffd35c"/>
<path d="M7,19 v-5 h10 v5 h-3 v-2 h-4 v2 z" fill="#3e8ee0"/></svg>
<svg style="left:207.5px;top:2138px" width="24" height="24" viewBox="0 0 24 24"><path d="M7,6 v-3 a2,2 0 0 1 2,-2 h6 a2,2 0 0 1 2,2 v3" fill="none" stroke="#2a9be8" stroke-width="1.8"/>
<rect x="1" y="5" width="22" height="18" rx="3" fill="#f4f4f4"/>
<rect x="1" y="18" width="22" height="5" rx="2" fill="#d8d8d8"/>
<rect x="7.5" y="9" width="4" height="4" fill="#f35325"/><rect x="12.5" y="9" width="4" height="4" fill="#81bc06"/>
<rect x="7.5" y="14" width="4" height="4" fill="#05a6f0"/><rect x="12.5" y="14" width="4" height="4" fill="#ffba08"/></svg>
<svg style="left:257px;top:2139px" width="24" height="23" viewBox="0 0 24 23"><path d="M1,8 l11,-7 l11,7 v13 h-22 z" fill="#0a5fbf"/>
<path d="M3,8 h18 v6 l-9,5 l-9,-5 z" fill="#fff"/>
<path d="M1,8 l11,7 l11,-7 v14 h-22 z" fill="#1e9be8"/>
<path d="M1,22 l11,-8 l11,8 z" fill="#2ab0f5"/></svg>
<svg style="left:307px;top:2139px" width="24" height="23" viewBox="0 0 24 23"><ellipse cx="11" cy="10" rx="10" ry="7" fill="#f2f2f2" stroke="#e03a3a" stroke-width="2" transform="rotate(-20 11 10)"/>
<ellipse cx="9" cy="15" rx="7" ry="3" fill="#9a9a9a" opacity="0.8"/>
<line x1="11" y1="2" x2="14" y2="17" stroke="#666" stroke-width="1"/>
<circle cx="13" cy="19" r="2.4" fill="none" stroke="#2a8be0" stroke-width="1.6"/>
<circle cx="19" cy="18" r="2.4" fill="none" stroke="#2a8be0" stroke-width="1.6"/></svg>
<svg style="left:355px;top:2138px" width="24" height="24" viewBox="0 0 24 24"><rect x="0" y="0" width="24" height="24" fill="#131722"/>
<path d="M3,8 h7 v8 h-3 v-5 h-4 z" fill="#fff"/><circle cx="12.5" cy="9.5" r="1.6" fill="#fff"/>
<path d="M13,16 l4,-8 h4 l-4,8 z" fill="#fff"/></svg>
<svg style="left:404px;top:2138px" width="24" height="24" viewBox="0 0 24 24"><defs><linearGradient id="eg3a" x1="0" y1="0.2" x2="1" y2="0.6"><stop offset="0" stop-color="#35c4f4"/><stop offset="0.5" stop-color="#2cc4c8"/><stop offset="1" stop-color="#6ae858"/></linearGradient>
<linearGradient id="eg3b" x1="0" y1="0" x2="0.2" y2="1"><stop offset="0" stop-color="#1290e0"/><stop offset="1" stop-color="#0878d8"/></linearGradient>
<clipPath id="ec3"><circle cx="12" cy="12" r="11.8"/></clipPath></defs>
<g clip-path="url(#ec3)">
<rect x="0" y="0" width="24" height="24" fill="url(#eg3a)"/>
<path d="M-1,11 Q3,6.5 8,6.8 Q12.5,7.2 14.5,10.5 Q11,10 9.5,13 Q8.5,17 11,20.5 Q13,24.5 17,25 L-1,25z" fill="url(#eg3b)"/>
<path d="M14.5,10.5 Q11,10 9.5,13 Q8.5,17 11,20.5 Q13,24.5 17,25 L25,25 L25,18.6 Q21,20.2 18.5,20 Q13.8,19.5 12.2,15.5 Q11.6,12.5 14.5,10.5z" fill="#0e54a4"/>
<path d="M12.2,15.5 Q11.6,12 14,11.3 Q16,11 16.4,13 Q16.2,14.5 15.5,15.2 Q16.5,17.5 19.5,18 Q22,18.3 25,17.8 L25,18.6 Q21,20.2 18.5,20 Q13.8,19.5 12.2,15.5z" fill="#22343f"/>
</g></svg>
<svg style="left:453px;top:2138px" width="24" height="24" viewBox="0 0 24 24"><defs><linearGradient id="opg" x1="0" y1="0" x2="1" y2="1"><stop offset="0" stop-color="#ff1b2d"/><stop offset="1" stop-color="#c8101e"/></linearGradient></defs>
<ellipse cx="12" cy="12" rx="10.8" ry="11.2" fill="url(#opg)"/>
<ellipse cx="12" cy="12" rx="4.6" ry="8.4" fill="#22343f"/></svg>
<svg style="left:502px;top:2138px" width="24" height="24" viewBox="0 0 24 24"><defs><radialGradient id="org" cx="0.65" cy="0.35" r="0.75"><stop offset="0" stop-color="#ffb000"/><stop offset="1" stop-color="#ff7a00"/></radialGradient></defs>
<circle cx="12" cy="12" r="12" fill="url(#org)"/>
<rect x="7.6" y="5.4" width="9.2" height="2.6" rx="1.3" fill="#fff"/>
<rect x="4.3" y="10.7" width="8.4" height="2.6" rx="1.3" fill="#fff"/>
<rect x="7.2" y="16.5" width="9.6" height="2.6" rx="1.3" fill="#fff"/></svg>
<svg style="left:550.5px;top:2138px" width="24" height="24" viewBox="0 0 24 24"><defs><radialGradient id="gg7" cx="0.42" cy="0.33" r="0.7"><stop offset="0" stop-color="#b8f0ff"/><stop offset="0.35" stop-color="#4ab8ec"/><stop offset="1" stop-color="#1448a0"/></radialGradient>
<radialGradient id="gc7" cx="0.45" cy="0.35" r="0.75"><stop offset="0" stop-color="#d8f860"/><stop offset="0.6" stop-color="#a8d038"/><stop offset="1" stop-color="#7aa818"/></radialGradient>
<radialGradient id="gh7" cx="0.5" cy="0.5" r="0.5"><stop offset="0" stop-color="#ffffff" stop-opacity="0.75"/><stop offset="1" stop-color="#ffffff" stop-opacity="0"/></radialGradient>
<clipPath id="gcl7"><circle cx="12" cy="12" r="10.8"/></clipPath></defs>
<circle cx="12" cy="12" r="10.8" fill="url(#gg7)"/>
<g clip-path="url(#gcl7)" fill="url(#gc7)">
<path d="M11.5,2.5 L16,1 L20,3 L23,7 L23.5,10.8 L21,11.2 L18.5,10.6 L16,11.3 L14,10.6 L11,10.4 L9.6,8.2 L10.6,6.2 L12,5z"/>
<path d="M6,3.8 L9.8,1.6 L10,3 L7.5,4.8z"/>
<path d="M5.5,15.6 L5.8,14 L9.7,11.7 L13,12 L16.4,12.1 L19.3,13.2 L20.3,15.9 L18.3,19.8 L15.5,22.3 L13.1,23 L11.6,19.4 L6.8,17.9z"/>
</g>
<circle cx="9.7" cy="7.3" r="4" fill="url(#gh7)"/></svg>
<div style="left:1870.50px;top:2132.40px;height:16px;line-height:16px;font-size:12px;color:#fff;white-space:pre;transform:scaleX(0.9324);transform-origin:0 0;">07:29</div>
<div style="left:1856.50px;top:2150.60px;height:16px;line-height:16px;font-size:12px;color:#fff;white-space:pre;transform:scaleX(0.9324);transform-origin:0 0;">17/03/2023</div>
<svg style="left:1920px;top:1080px" width="1920" height="1080" viewBox="1920 1080 1920 1080">
<defs>
<linearGradient id="wpbase" gradientUnits="userSpaceOnUse" x1="1920" y1="0" x2="3840" y2="0">
<stop offset="0" stop-color="#00b2fe"/><stop offset="0.198" stop-color="#00b0fc"/><stop offset="0.354" stop-color="#00a6f8"/><stop offset="0.51" stop-color="#0098f4"/>
<stop offset="0.667" stop-color="#0582f0"/><stop offset="0.745" stop-color="#0670f0"/><stop offset="0.802" stop-color="#0664e8"/><stop offset="0.854" stop-color="#0652d4"/><stop offset="0.927" stop-color="#0648c4"/><stop offset="1" stop-color="#0842bc"/></linearGradient>
<linearGradient id="wptop" gradientUnits="userSpaceOnUse" x1="3300" y1="1418" x2="3383" y2="1130">
<stop offset="0" stop-color="#0440b8" stop-opacity="0.05"/><stop offset="1" stop-color="#0440b8" stop-opacity="0.6"/></linearGradient>
<linearGradient id="wpvert" gradientUnits="userSpaceOnUse" x1="0" y1="1080" x2="0" y2="2160">
<stop offset="0" stop-color="#0a60c8" stop-opacity="0.1"/><stop offset="0.5" stop-color="#0a60c8" stop-opacity="0"/></linearGradient>
<linearGradient id="wpbeam" gradientUnits="userSpaceOnUse" x1="1920" y1="0" x2="3460" y2="0">
<stop offset="0" stop-color="#10b4ff" stop-opacity="0.0"/><stop offset="0.6" stop-color="#10b0ff" stop-opacity="0.06"/><stop offset="1" stop-color="#30c0ff" stop-opacity="0.2"/></linearGradient>
<linearGradient id="wpbot" gradientUnits="userSpaceOnUse" x1="2245" y1="0" x2="3840" y2="0">
<stop offset="0" stop-color="#0858d0" stop-opacity="0.25"/><stop offset="0.7" stop-color="#0850c8" stop-opacity="0.45"/><stop offset="1" stop-color="#0848c0" stop-opacity="0.3"/></linearGradient>
<radialGradient id="wpglow" gradientUnits="userSpaceOnUse" cx="3470" cy="1640" r="180">
<stop offset="0" stop-color="#1890ff" stop-opacity="0.7"/><stop offset="1" stop-color="#1080ff" stop-opacity="0"/></radialGradient>
<filter id="blurtop" x="-0.1" y="-0.1" width="1.2" height="1.2"><feGaussianBlur stdDeviation="45 0"/></filter>
<linearGradient id="pane" x1="0" y1="0" x2="0" y2="1">
<stop offset="0" stop-color="#2ab6ff"/><stop offset="1" stop-color="#22acff"/></linearGradient>
</defs>
<rect x="1920" y="1080" width="1920" height="1080" fill="url(#wpbase)"/>
<rect x="1920" y="1080" width="1920" height="1080" fill="url(#wpvert)"/>
<polygon points="2131,1080 3520,1040 3520,1481.3" fill="url(#wptop)" filter="url(#blurtop)"/>
<polygon points="1920,1080 2131,1080 3460,1464 3460,1817 3115,1769 1920,1923" fill="url(#wpbeam)"/>
<polygon points="2245,2160 3460,1819 3460,2160" fill="url(#wpbot)"/>

<circle cx="3470" cy="1640" r="180" fill="url(#wpglow)"/>
<line x1="2131" y1="1080" x2="3460" y2="1464" stroke="#40c8ff" stroke-width="1.5" opacity="0.45"/>
<line x1="1920" y1="1923" x2="3115" y2="1769" stroke="#40c8ff" stroke-width="1.5" opacity="0.4"/>
<line x1="2245" y1="2160" x2="3460" y2="1819" stroke="#40b8ff" stroke-width="1.2" opacity="0.25"/>
<g stroke="#5ad8ff" stroke-width="1.6" fill="url(#pane)" fill-opacity="0.9">
<polygon points="3114.3,1512.8 3261.4,1491.3 3261.4,1635.6 3114.3,1635.6"/>
<polygon points="3269.7,1489.3 3459.6,1464.2 3459.6,1635.6 3269.7,1635.6"/>
<polygon points="3114.3,1644.6 3261.4,1644.6 3261.4,1789.7 3114.3,1769.5"/>
<polygon points="3269.7,1644.6 3459.6,1644.6 3459.6,1817 3269.7,1792.2"/>
</g>
<polygon points="3115,1769.5 3261,1747.7 3261,1789.7" fill="#40b8ff" opacity="0.3"/>
<polygon points="3270,1745.6 3459,1720 3459,1817 3270,1792" fill="#40b8ff" opacity="0.3"/>
<line x1="3115" y1="1769.5" x2="3261" y2="1747.7" stroke="#60d0ff" stroke-width="1" opacity="0.5"/>
<line x1="3270" y1="1745.6" x2="3459" y2="1720" stroke="#60d0ff" stroke-width="1" opacity="0.5"/>
</svg>
<div style="left:1920px;top:1080px;width:10px;height:1040px;background:linear-gradient(90deg,rgba(0,30,100,0.35),rgba(0,30,100,0));"></div>
<svg style="left:2467px;top:1289px" width="44" height="48" viewBox="0 0 44 48">
<path d="M8,2.5 h23.5 l10,10 v33 h-33.5z" fill="#fff" stroke="#8a8a8a" stroke-width="1"/>
<path d="M31.5,2.5 v10 h10" fill="#e8e8e8" stroke="#8a8a8a" stroke-width="1"/>
<g stroke="#8a8a8a" stroke-width="1.6"><line x1="12" y1="9" x2="30" y2="9"/>
<line x1="22" y1="15" x2="38" y2="15"/><line x1="22" y1="20" x2="38" y2="20"/><line x1="22" y1="25" x2="38" y2="25"/><line x1="22" y1="30" x2="38" y2="30"/><line x1="22" y1="35" x2="38" y2="35"/><line x1="22" y1="40" x2="38" y2="40"/></g>
<path d="M2,17 l18,-3 v30 l-18,-3z" fill="#2b579a"/>
<text x="10.5" y="36" font-family="Liberation Sans" font-weight="700" font-size="13" fill="#fff" text-anchor="middle">W</text>
</svg>
<div style="left:2479.00px;top:1340.00px;height:16px;line-height:16px;font-size:12px;color:#fff;white-space:pre;transform:scaleX(0.9164);transform-origin:0 0;text-shadow:0 0 2px #000,1px 1px 1px #000;">New</div>
<div style="left:2462.50px;top:1354.50px;height:16px;line-height:16px;font-size:12px;color:#fff;white-space:pre;transform:scaleX(0.9938);transform-origin:0 0;text-shadow:0 0 2px #000,1px 1px 1px #000;">Microsof...</div>
<div style="left:3424px;top:1105px;width:319px;height:143px;background:rgba(0,0,0,0.25);filter:blur(3px);"></div>
<div style="left:3422px;top:1103px;width:319px;height:143px;background:#f0f0f0;border:1px solid #a0a0a0;"></div>
<div style="left:3423px;top:1104px;width:317px;height:48px;background:#fff;"></div>
<svg style="left:3430px;top:1111px" width="16" height="14"><rect x="0.5" y="0.5" width="15" height="13" fill="#f4f4f4" stroke="#9a9a9a"/><rect x="3" y="3" width="5" height="8" fill="#3a8a6a"/><rect x="9" y="3" width="4" height="8" fill="#d0d0d0"/></svg>
<div style="left:3451.60px;top:1110.00px;height:16px;line-height:16px;font-size:12.5px;color:#9a9a9a;white-space:pre;transform:scaleX(0.9034);transform-origin:0 0;">Message Log</div>
<div style="left:3622px;top:1117.5px;width:10px;height:1px;background:#8a8a8a;"></div>
<svg style="left:3666px;top:1111.5px" width="12" height="12"><rect x="1" y="1" width="10" height="10" fill="none" stroke="#8a8a8a" stroke-width="1"/></svg>
<svg style="left:3712px;top:1111.5px" width="12" height="12"><g stroke="#8a8a8a" stroke-width="1"><line x1="0.8" y1="0.8" x2="11.2" y2="11.2"/><line x1="11.2" y1="0.8" x2="0.8" y2="11.2"/></g></svg>
<div style="left:3429.50px;top:1135.00px;height:16px;line-height:16px;font-size:12.5px;color:#707070;white-space:pre;transform:scaleX(0.8981);transform-origin:0 0;">Close</div>
<div style="left:3472.00px;top:1135.00px;height:16px;line-height:16px;font-size:12.5px;color:#707070;white-space:pre;transform:scaleX(0.9378);transform-origin:0 0;">Edit</div>
<div style="left:3506.00px;top:1135.00px;height:16px;line-height:16px;font-size:12.5px;color:#707070;white-space:pre;transform:scaleX(0.9090);transform-origin:0 0;">Send For Analysis</div>
<div style="left:3425px;top:1156px;width:314.5px;height:88px;background:#fff;border-top:2px solid #6a6a6a;border-left:2px solid #6a6a6a;"></div>
<div style="left:3430.10px;top:1160.00px;height:16px;line-height:16px;font-size:12.5px;color:#000;white-space:pre;transform:scaleX(0.9000);transform-origin:0 0;">FDAXM23-EUREX[M]  30 Min   #4 | Reloading chart. | 202</div>
<div style="left:3430.10px;top:1179.00px;height:16px;line-height:16px;font-size:12.5px;color:#000;white-space:pre;transform:scaleX(0.9000);transform-origin:0 0;">FDAXM23-EUREX[M]  1 Min   #5 | Reloading chart. | 2023</div>
<div style="left:3430.10px;top:1198.00px;height:16px;line-height:16px;font-size:12.5px;color:#000;white-space:pre;transform:scaleX(0.9000);transform-origin:0 0;">FDAXH23-EUREX[M]  1 Min   #5 | Reloading chart. | 2023</div>
<div style="left:3722.5px;top:1158px;width:16px;height:70px;background:#f0f0f0;"></div>
<svg style="left:3726px;top:1164px" width="10" height="8"><path d="M1,6 L5,2 L9,6" fill="none" stroke="#606060" stroke-width="1.5"/></svg>
<svg style="left:3726px;top:1215px" width="10" height="8"><path d="M1,2 L5,6 L9,2" fill="none" stroke="#606060" stroke-width="1.5"/></svg>
<div style="left:3723.5px;top:1193px;width:14px;height:16.6px;background:#cdcdcd;"></div>
<div style="left:3427px;top:1228px;width:311px;height:15.5px;background:#f0f0f0;"></div>
<svg style="left:3431px;top:1231px" width="8" height="10"><path d="M6,1 L2,5 L6,9" fill="none" stroke="#606060" stroke-width="1.5"/></svg>
<svg style="left:3709px;top:1231px" width="8" height="10"><path d="M2,1 L6,5 L2,9" fill="none" stroke="#606060" stroke-width="1.5"/></svg>
<div style="left:3444px;top:1228.5px;width:17px;height:14.5px;background:#cdcdcd;"></div>
<div style="left:1927.7px;top:1965.8px;width:1536.8px;height:153.2px;background:#2f86c0;"></div>
<div style="left:1928.7px;top:1966.8px;width:1534.8px;height:151.2px;background:#f0f0f0;"></div>
<div style="left:1928.7px;top:1966.8px;width:1534.8px;height:50.2px;background:#fff;"></div>
<svg style="left:1936.36px;top:1973.86px" width="15.2727" height="15.2727" viewBox="0 0 24 24"><defs><radialGradient id="gg8" cx="0.42" cy="0.33" r="0.7"><stop offset="0" stop-color="#b8f0ff"/><stop offset="0.35" stop-color="#4ab8ec"/><stop offset="1" stop-color="#1448a0"/></radialGradient>
<radialGradient id="gc8" cx="0.45" cy="0.35" r="0.75"><stop offset="0" stop-color="#d8f860"/><stop offset="0.6" stop-color="#a8d038"/><stop offset="1" stop-color="#7aa818"/></radialGradient>
<radialGradient id="gh8" cx="0.5" cy="0.5" r="0.5"><stop offset="0" stop-color="#ffffff" stop-opacity="0.75"/><stop offset="1" stop-color="#ffffff" stop-opacity="0"/></radialGradient>
<clipPath id="gcl8"><circle cx="12" cy="12" r="10.8"/></clipPath></defs>
<circle cx="12" cy="12" r="10.8" fill="url(#gg8)"/>
<g clip-path="url(#gcl8)" fill="url(#gc8)">
<path d="M11.5,2.5 L16,1 L20,3 L23,7 L23.5,10.8 L21,11.2 L18.5,10.6 L16,11.3 L14,10.6 L11,10.4 L9.6,8.2 L10.6,6.2 L12,5z"/>
<path d="M6,3.8 L9.8,1.6 L10,3 L7.5,4.8z"/>
<path d="M5.5,15.6 L5.8,14 L9.7,11.7 L13,12 L16.4,12.1 L19.3,13.2 L20.3,15.9 L18.3,19.8 L15.5,22.3 L13.1,23 L11.6,19.4 L6.8,17.9z"/>
</g>
<circle cx="9.7" cy="7.3" r="4" fill="url(#gh8)"/></svg>
<div style="left:1958.00px;top:1973.70px;height:16px;line-height:16px;font-size:12.5px;color:#9a9a9a;white-space:pre;transform:scaleX(0.8958);transform-origin:0 0;">Sierra Chart 2480 DAX_Test  Teton CME Order Routing 2023-03-17  07:29:42 Fri [Sim]  DF:38235  ST:4, 4</div>
<div style="left:3345px;top:1981px;width:10px;height:1px;background:#8a8a8a;"></div>
<svg style="left:3389px;top:1975px" width="12" height="12"><rect x="1" y="1" width="10" height="10" fill="none" stroke="#8a8a8a" stroke-width="1"/></svg>
<svg style="left:3435px;top:1975px" width="12" height="12"><g stroke="#8a8a8a" stroke-width="1"><line x1="0.8" y1="0.8" x2="11.2" y2="11.2"/><line x1="11.2" y1="0.8" x2="0.8" y2="11.2"/></g></svg>
<div style="left:1936.00px;top:1998.60px;height:16px;line-height:16px;font-size:12.5px;color:#707070;white-space:pre;transform:scaleX(0.9086);transform-origin:0 0;">File</div>
<div style="left:1968.00px;top:1998.60px;height:16px;line-height:16px;font-size:12.5px;color:#707070;white-space:pre;transform:scaleX(0.9285);transform-origin:0 0;">Edit</div>
<div style="left:2002.30px;top:1998.60px;height:16px;line-height:16px;font-size:12.5px;color:#707070;white-space:pre;transform:scaleX(0.9259);transform-origin:0 0;">Chart</div>
<div style="left:2045.00px;top:1998.60px;height:16px;line-height:16px;font-size:12.5px;color:#707070;white-space:pre;transform:scaleX(0.9238);transform-origin:0 0;">Analysis</div>
<div style="left:2102.30px;top:1998.60px;height:16px;line-height:16px;font-size:12.5px;color:#707070;white-space:pre;transform:scaleX(0.9150);transform-origin:0 0;">Tools</div>
<div style="left:2143.00px;top:1998.60px;height:16px;line-height:16px;font-size:12.5px;color:#707070;white-space:pre;transform:scaleX(0.9029);transform-origin:0 0;">Spreadsheet</div>
<div style="left:2221.50px;top:1998.60px;height:16px;line-height:16px;font-size:12.5px;color:#707070;white-space:pre;transform:scaleX(0.8543);transform-origin:0 0;">Trade</div>
<div style="left:2263.00px;top:1998.60px;height:16px;line-height:16px;font-size:12.5px;color:#707070;white-space:pre;transform:scaleX(0.9319);transform-origin:0 0;">Global Settings</div>
<div style="left:2356.00px;top:1998.60px;height:16px;line-height:16px;font-size:12.5px;color:#707070;white-space:pre;transform:scaleX(0.9897);transform-origin:0 0;">Window</div>
<div style="left:2414.00px;top:1998.60px;height:16px;line-height:16px;font-size:12.5px;color:#707070;white-space:pre;transform:scaleX(0.8293);transform-origin:0 0;">CB</div>
<div style="left:2443.00px;top:1998.60px;height:16px;line-height:16px;font-size:12.5px;color:#707070;white-space:pre;transform:scaleX(0.9124);transform-origin:0 0;">CW</div>
<div style="left:2476.00px;top:1998.60px;height:16px;line-height:16px;font-size:12.5px;color:#707070;white-space:pre;transform:scaleX(0.9725);transform-origin:0 0;">Help</div>
<div style="left:1930px;top:2017.5px;width:328px;height:32.5px;background:#50f050;border-right:1px solid #9a9a9a;border-bottom:1px solid #9a9a9a;"></div>
<div style="left:1933.00px;top:2025.50px;height:16px;line-height:16px;font-size:12.5px;color:#000;white-space:pre;transform:scaleX(0.8611);transform-origin:0 0;">DF:38239  ST:4, 4  BR:1.02M</div>
<div style="left:2261px;top:2017.5px;width:34px;height:32.5px;background:#f0f0f0;border:1px solid #b9b9b9;border-right-color:#9a9a9a;border-bottom-color:#9a9a9a;"></div>
<div style="left:2266.69px;top:2019.25px;height:16px;line-height:16px;font-size:12.5px;color:#000;white-space:pre;transform:scaleX(0.9300);transform-origin:0 0;">Find</div>
<div style="left:2263.14px;top:2032.25px;height:16px;line-height:16px;font-size:12.5px;color:#000;white-space:pre;transform:scaleX(0.9300);transform-origin:0 0;">Symb</div>
<div style="left:2296px;top:2017.5px;width:41.7px;height:32.5px;background:#f0f0f0;border:1px solid #b9b9b9;border-right-color:#9a9a9a;border-bottom-color:#9a9a9a;"></div>
<div style="left:2302.63px;top:2019.25px;height:16px;line-height:16px;font-size:12.5px;color:#000;white-space:pre;transform:scaleX(0.9300);transform-origin:0 0;">Open</div>
<div style="left:2300.05px;top:2032.25px;height:16px;line-height:16px;font-size:12.5px;color:#000;white-space:pre;transform:scaleX(0.9300);transform-origin:0 0;">Cbook</div>
<div style="left:2338px;top:2017.5px;width:41px;height:32.5px;background:#f0f0f0;border:1px solid #b9b9b9;border-right-color:#9a9a9a;border-bottom-color:#9a9a9a;"></div>
<div style="left:2345.25px;top:2019.25px;height:16px;line-height:16px;font-size:12.5px;color:#000;white-space:pre;transform:scaleX(0.9300);transform-origin:0 0;">Save</div>
<div style="left:2341.70px;top:2032.25px;height:16px;line-height:16px;font-size:12.5px;color:#000;white-space:pre;transform:scaleX(0.9300);transform-origin:0 0;">Cbook</div>
<div style="left:2380px;top:2017.5px;width:41.6px;height:32.5px;background:#f0f0f0;border:1px solid #b9b9b9;border-right-color:#9a9a9a;border-bottom-color:#9a9a9a;"></div>
<div style="left:2385.94px;top:2019.25px;height:16px;line-height:16px;font-size:12.5px;color:#000;white-space:pre;transform:scaleX(0.9300);transform-origin:0 0;">Close</div>
<div style="left:2384.00px;top:2032.25px;height:16px;line-height:16px;font-size:12.5px;color:#000;white-space:pre;transform:scaleX(0.9300);transform-origin:0 0;">Cbook</div>
<div style="left:2426px;top:2017.5px;width:23.5px;height:32.5px;background:#f0f0f0;border:1px solid #b9b9b9;border-right-color:#9a9a9a;border-bottom-color:#9a9a9a;"></div>
<div style="left:2429.03px;top:2019.25px;height:16px;line-height:16px;font-size:12.5px;color:#000;white-space:pre;transform:scaleX(0.9300);transform-origin:0 0;">Srv</div>
<div style="left:2429.03px;top:2032.25px;height:16px;line-height:16px;font-size:12.5px;color:#000;white-space:pre;transform:scaleX(0.9300);transform-origin:0 0;">Set</div>
<div style="left:2450px;top:2017.5px;width:28px;height:32.5px;background:#f0f0f0;border:1px solid #b9b9b9;border-right-color:#9a9a9a;border-bottom-color:#9a9a9a;"></div>
<div style="left:2453.34px;top:2025.75px;height:16px;line-height:16px;font-size:12.5px;color:#9a9a9a;white-space:pre;transform:scaleX(0.9300);transform-origin:0 0;">Con</div>
<div style="left:2479px;top:2017.5px;width:23px;height:32.5px;background:#f0f0f0;border:1px solid #b9b9b9;border-right-color:#9a9a9a;border-bottom-color:#9a9a9a;"></div>
<div style="left:2482.10px;top:2025.75px;height:16px;line-height:16px;font-size:12.5px;color:#000;white-space:pre;transform:scaleX(0.9300);transform-origin:0 0;">Dis</div>
<div style="left:2507px;top:2017.5px;width:35px;height:32.5px;background:#f0f0f0;border:1px solid #b9b9b9;border-right-color:#9a9a9a;border-bottom-color:#9a9a9a;"></div>
<div style="left:2510.29px;top:2019.25px;height:16px;line-height:16px;font-size:12.5px;color:#000;white-space:pre;transform:scaleX(0.9300);transform-origin:0 0;">Chart</div>
<div style="left:2515.78px;top:2032.25px;height:16px;line-height:16px;font-size:12.5px;color:#000;white-space:pre;transform:scaleX(0.9300);transform-origin:0 0;">Set</div>
<div style="left:2543px;top:2017.5px;width:35px;height:32.5px;background:#f0f0f0;border:1px solid #b9b9b9;border-right-color:#9a9a9a;border-bottom-color:#9a9a9a;"></div>
<div style="left:2546.29px;top:2019.25px;height:16px;line-height:16px;font-size:12.5px;color:#000;white-space:pre;transform:scaleX(0.9300);transform-origin:0 0;">Chart</div>
<div style="left:2548.87px;top:2032.25px;height:16px;line-height:16px;font-size:12.5px;color:#000;white-space:pre;transform:scaleX(0.9300);transform-origin:0 0;">Stdy</div>
<div style="left:2583px;top:2017.5px;width:22px;height:32.5px;background:#f0f0f0;border:1px solid #b9b9b9;border-right-color:#9a9a9a;border-bottom-color:#9a9a9a;"></div>
<div style="left:2586.57px;top:2025.75px;height:16px;line-height:16px;font-size:12.5px;color:#000;white-space:pre;transform:scaleX(0.9300);transform-origin:0 0;">Ptr</div>
<div style="left:2605px;top:2017.5px;width:35.5px;height:32.5px;background:#f7f7f7;border:1px solid #8c8c8c;border-right-color:#9a9a9a;border-bottom-color:#9a9a9a;"></div>
<div style="left:2608.54px;top:2019.25px;height:16px;line-height:16px;font-size:12.5px;color:#000;white-space:pre;transform:scaleX(0.9300);transform-origin:0 0;">Chart</div>
<div style="left:2614.78px;top:2032.25px;height:16px;line-height:16px;font-size:12.5px;color:#000;white-space:pre;transform:scaleX(0.9300);transform-origin:0 0;">Val</div>
<div style="left:2641px;top:2017.5px;width:28px;height:32.5px;background:#f0f0f0;border:1px solid #b9b9b9;border-right-color:#9a9a9a;border-bottom-color:#9a9a9a;"></div>
<div style="left:2644.01px;top:2025.75px;height:16px;line-height:16px;font-size:12.5px;color:#000;white-space:pre;transform:scaleX(0.9300);transform-origin:0 0;">Line</div>
<div style="left:2670px;top:2017.5px;width:26px;height:32.5px;background:#f0f0f0;border:1px solid #b9b9b9;border-right-color:#9a9a9a;border-bottom-color:#9a9a9a;"></div>
<div style="left:2672.66px;top:2025.75px;height:16px;line-height:16px;font-size:12.5px;color:#000;white-space:pre;transform:scaleX(0.9300);transform-origin:0 0;">Ray</div>
<div style="left:2696px;top:2017.5px;width:28px;height:32.5px;background:#f0f0f0;border:1px solid #b9b9b9;border-right-color:#9a9a9a;border-bottom-color:#9a9a9a;"></div>
<div style="left:2699.34px;top:2025.75px;height:16px;line-height:16px;font-size:12.5px;color:#000;white-space:pre;transform:scaleX(0.9300);transform-origin:0 0;">Text</div>
<div style="left:2725px;top:2017.5px;width:31px;height:32.5px;background:#f0f0f0;border:1px solid #b9b9b9;border-right-color:#9a9a9a;border-bottom-color:#9a9a9a;"></div>
<div style="left:2729.84px;top:2019.25px;height:16px;line-height:16px;font-size:12.5px;color:#9a9a9a;white-space:pre;transform:scaleX(0.9300);transform-origin:0 0;">Tool</div>
<div style="left:2728.22px;top:2032.25px;height:16px;line-height:16px;font-size:12.5px;color:#9a9a9a;white-space:pre;transform:scaleX(0.9300);transform-origin:0 0;">Cfg1</div>
<div style="left:2757px;top:2017.5px;width:31.8px;height:32.5px;background:#f0f0f0;border:1px solid #b9b9b9;border-right-color:#9a9a9a;border-bottom-color:#9a9a9a;"></div>
<div style="left:2762.24px;top:2019.25px;height:16px;line-height:16px;font-size:12.5px;color:#9a9a9a;white-space:pre;transform:scaleX(0.9300);transform-origin:0 0;">Tool</div>
<div style="left:2760.62px;top:2032.25px;height:16px;line-height:16px;font-size:12.5px;color:#9a9a9a;white-space:pre;transform:scaleX(0.9300);transform-origin:0 0;">Cfg2</div>
<div style="left:2793px;top:2017.5px;width:35px;height:32.5px;background:#f0f0f0;border:1px solid #b9b9b9;border-right-color:#9a9a9a;border-bottom-color:#9a9a9a;"></div>
<div style="left:2795.64px;top:2019.25px;height:16px;line-height:16px;font-size:12.5px;color:#000;white-space:pre;transform:scaleX(0.9300);transform-origin:0 0;">Rplay</div>
<div style="left:2799.52px;top:2032.25px;height:16px;line-height:16px;font-size:12.5px;color:#000;white-space:pre;transform:scaleX(0.9300);transform-origin:0 0;">Chrt</div>
<div style="left:2829px;top:2017.5px;width:35px;height:32.5px;background:#f0f0f0;border:1px solid #b9b9b9;border-right-color:#9a9a9a;border-bottom-color:#9a9a9a;"></div>
<div style="left:2838.53px;top:2019.25px;height:16px;line-height:16px;font-size:12.5px;color:#000;white-space:pre;transform:scaleX(0.9300);transform-origin:0 0;">Val</div>
<div style="left:2833.26px;top:2032.25px;height:16px;line-height:16px;font-size:12.5px;color:#000;white-space:pre;transform:scaleX(0.9300);transform-origin:0 0;">Wind</div>
<div style="left:2865px;top:2017.5px;width:30px;height:32.5px;background:#f0f0f0;border:1px solid #b9b9b9;border-right-color:#9a9a9a;border-bottom-color:#9a9a9a;"></div>
<div style="left:2869.34px;top:2019.25px;height:16px;line-height:16px;font-size:12.5px;color:#000;white-space:pre;transform:scaleX(0.9300);transform-origin:0 0;">Tool</div>
<div style="left:2872.03px;top:2032.25px;height:16px;line-height:16px;font-size:12.5px;color:#000;white-space:pre;transform:scaleX(0.9300);transform-origin:0 0;">Val</div>
<div style="left:2896px;top:2017.5px;width:46.5px;height:32.5px;background:#f0f0f0;border:1px solid #b9b9b9;border-right-color:#9a9a9a;border-bottom-color:#9a9a9a;"></div>
<div style="left:2902.46px;top:2019.25px;height:16px;line-height:16px;font-size:12.5px;color:#000;white-space:pre;transform:scaleX(0.9300);transform-origin:0 0;">Cmpct</div>
<div style="left:2900.62px;top:2032.25px;height:16px;line-height:16px;font-size:12.5px;color:#000;white-space:pre;transform:scaleX(0.9300);transform-origin:0 0;">ToolVal</div>
<div style="left:2947px;top:2017.5px;width:28.7px;height:32.5px;background:#f7f7f7;border:1px solid #8c8c8c;border-right-color:#9a9a9a;border-bottom-color:#9a9a9a;"></div>
<div style="left:2950.37px;top:2019.25px;height:16px;line-height:16px;font-size:12.5px;color:#000;white-space:pre;transform:scaleX(0.9300);transform-origin:0 0;">Msg</div>
<div style="left:2951.65px;top:2032.25px;height:16px;line-height:16px;font-size:12.5px;color:#000;white-space:pre;transform:scaleX(0.9300);transform-origin:0 0;">Log</div>
<div style="left:2977px;top:2017.5px;width:28px;height:32.5px;background:#f0f0f0;border:1px solid #b9b9b9;border-right-color:#9a9a9a;border-bottom-color:#9a9a9a;"></div>
<div style="left:2980.98px;top:2019.25px;height:16px;line-height:16px;font-size:12.5px;color:#000;white-space:pre;transform:scaleX(0.9300);transform-origin:0 0;">Pos</div>
<div style="left:2980.99px;top:2032.25px;height:16px;line-height:16px;font-size:12.5px;color:#000;white-space:pre;transform:scaleX(0.9300);transform-origin:0 0;">Win</div>
<div style="left:3010px;top:2017.5px;width:32.5px;height:32.5px;background:#f0f0f0;border:1px solid #b9b9b9;border-right-color:#9a9a9a;border-bottom-color:#9a9a9a;"></div>
<div style="left:3013.33px;top:2025.75px;height:16px;line-height:16px;font-size:12.5px;color:#000;white-space:pre;transform:scaleX(0.9300);transform-origin:0 0;">Daily</div>
<div style="left:3043px;top:2017.5px;width:36px;height:32.5px;background:#f0f0f0;border:1px solid #b9b9b9;border-right-color:#9a9a9a;border-bottom-color:#9a9a9a;"></div>
<div style="left:3046.25px;top:2025.75px;height:16px;line-height:16px;font-size:12.5px;color:#000;white-space:pre;transform:scaleX(0.9300);transform-origin:0 0;">Week</div>
<div style="left:3080px;top:2017.5px;width:23px;height:32.5px;background:#f0f0f0;border:1px solid #b9b9b9;border-right-color:#9a9a9a;border-bottom-color:#9a9a9a;"></div>
<div style="left:3083.43px;top:2025.75px;height:16px;line-height:16px;font-size:12.5px;color:#000;white-space:pre;transform:scaleX(0.9300);transform-origin:0 0;">1M</div>
<div style="left:3104px;top:2017.5px;width:23px;height:32.5px;background:#f0f0f0;border:1px solid #b9b9b9;border-right-color:#9a9a9a;border-bottom-color:#9a9a9a;"></div>
<div style="left:3107.43px;top:2025.75px;height:16px;line-height:16px;font-size:12.5px;color:#000;white-space:pre;transform:scaleX(0.9300);transform-origin:0 0;">5M</div>
<div style="left:3128px;top:2017.5px;width:29px;height:32.5px;background:#f0f0f0;border:1px solid #b9b9b9;border-right-color:#9a9a9a;border-bottom-color:#9a9a9a;"></div>
<div style="left:3131.19px;top:2025.75px;height:16px;line-height:16px;font-size:12.5px;color:#000;white-space:pre;transform:scaleX(0.9300);transform-origin:0 0;">30M</div>
<div style="left:3158px;top:2017.5px;width:21.8px;height:32.5px;background:#f0f0f0;border:1px solid #b9b9b9;border-right-color:#9a9a9a;border-bottom-color:#9a9a9a;"></div>
<div style="left:3161.47px;top:2025.75px;height:16px;line-height:16px;font-size:12.5px;color:#000;white-space:pre;transform:scaleX(0.9300);transform-origin:0 0;">1H</div>
<div style="left:3180px;top:2017.5px;width:35.5px;height:32.5px;background:#f0f0f0;border:1px solid #b9b9b9;border-right-color:#9a9a9a;border-bottom-color:#9a9a9a;"></div>
<div style="left:3183.85px;top:2025.75px;height:16px;line-height:16px;font-size:12.5px;color:#000;white-space:pre;transform:scaleX(0.9300);transform-origin:0 0;">Hand</div>
<div style="left:1930px;top:2051px;width:27px;height:33px;background:#f0f0f0;border:1px solid #b9b9b9;border-right-color:#9a9a9a;border-bottom-color:#9a9a9a;"></div>
<div style="left:1932.51px;top:2059.50px;height:16px;line-height:16px;font-size:12.5px;color:#000;white-space:pre;transform:scaleX(0.9300);transform-origin:0 0;">Line</div>
<div style="left:1958px;top:2051px;width:25.7px;height:33px;background:#f0f0f0;border:1px solid #b9b9b9;border-right-color:#9a9a9a;border-bottom-color:#9a9a9a;"></div>
<div style="left:1960.51px;top:2059.50px;height:16px;line-height:16px;font-size:12.5px;color:#000;white-space:pre;transform:scaleX(0.9300);transform-origin:0 0;">Ray</div>
<div style="left:1984px;top:2051px;width:35px;height:33px;background:#f0f0f0;border:1px solid #b9b9b9;border-right-color:#9a9a9a;border-bottom-color:#9a9a9a;"></div>
<div style="left:1987.29px;top:2053.00px;height:16px;line-height:16px;font-size:12.5px;color:#000;white-space:pre;transform:scaleX(0.9300);transform-origin:0 0;">Chart</div>
<div style="left:1989.87px;top:2066.00px;height:16px;line-height:16px;font-size:12.5px;color:#000;white-space:pre;transform:scaleX(0.9300);transform-origin:0 0;">Calc</div>
<div style="left:2020px;top:2051px;width:28px;height:33px;background:#f0f0f0;border:1px solid #b9b9b9;border-right-color:#9a9a9a;border-bottom-color:#9a9a9a;"></div>
<div style="left:2023.66px;top:2053.00px;height:16px;line-height:16px;font-size:12.5px;color:#000;white-space:pre;transform:scaleX(0.9300);transform-origin:0 0;">Vert</div>
<div style="left:2023.01px;top:2066.00px;height:16px;line-height:16px;font-size:12.5px;color:#000;white-space:pre;transform:scaleX(0.9300);transform-origin:0 0;">Line</div>
<div style="left:2049px;top:2051px;width:28.5px;height:33px;background:#f0f0f0;border:1px solid #b9b9b9;border-right-color:#9a9a9a;border-bottom-color:#9a9a9a;"></div>
<div style="left:2052.59px;top:2059.50px;height:16px;line-height:16px;font-size:12.5px;color:#000;white-space:pre;transform:scaleX(0.9300);transform-origin:0 0;">Text</div>
<div style="left:2078px;top:2051px;width:33.6px;height:33px;background:#f0f0f0;border:1px solid #b9b9b9;border-right-color:#9a9a9a;border-bottom-color:#9a9a9a;"></div>
<div style="left:2081.56px;top:2053.00px;height:16px;line-height:16px;font-size:12.5px;color:#000;white-space:pre;transform:scaleX(0.9300);transform-origin:0 0;">Price</div>
<div style="left:2080.91px;top:2066.00px;height:16px;line-height:16px;font-size:12.5px;color:#000;white-space:pre;transform:scaleX(0.9300);transform-origin:0 0;">Retrc</div>
<div style="left:2112px;top:2051px;width:37.8px;height:33px;background:#f0f0f0;border:1px solid #b9b9b9;border-right-color:#9a9a9a;border-bottom-color:#9a9a9a;"></div>
<div style="left:2117.66px;top:2053.00px;height:16px;line-height:16px;font-size:12.5px;color:#000;white-space:pre;transform:scaleX(0.9300);transform-origin:0 0;">Price</div>
<div style="left:2114.42px;top:2066.00px;height:16px;line-height:16px;font-size:12.5px;color:#000;white-space:pre;transform:scaleX(0.9300);transform-origin:0 0;">Expan</div>
<div style="left:2150px;top:2051px;width:31.5px;height:33px;background:#f0f0f0;border:1px solid #b9b9b9;border-right-color:#9a9a9a;border-bottom-color:#9a9a9a;"></div>
<div style="left:2153.80px;top:2053.00px;height:16px;line-height:16px;font-size:12.5px;color:#000;white-space:pre;transform:scaleX(0.9300);transform-origin:0 0;">Rect</div>
<div style="left:2154.76px;top:2066.00px;height:16px;line-height:16px;font-size:12.5px;color:#000;white-space:pre;transform:scaleX(0.9300);transform-origin:0 0;">angl</div>
<div style="left:2182px;top:2051px;width:28px;height:33px;background:#f0f0f0;border:1px solid #b9b9b9;border-right-color:#9a9a9a;border-bottom-color:#9a9a9a;"></div>
<div style="left:2184.05px;top:2059.50px;height:16px;line-height:16px;font-size:12.5px;color:#000;white-space:pre;transform:scaleX(0.9300);transform-origin:0 0;">DVP</div>
<div style="left:2211px;top:2051px;width:40px;height:33px;background:#f0f0f0;border:1px solid #b9b9b9;border-right-color:#9a9a9a;border-bottom-color:#9a9a9a;"></div>
<div style="left:2214.20px;top:2053.00px;height:16px;line-height:16px;font-size:12.5px;color:#000;white-space:pre;transform:scaleX(0.9300);transform-origin:0 0;">Rewrd</div>
<div style="left:2219.70px;top:2066.00px;height:16px;line-height:16px;font-size:12.5px;color:#000;white-space:pre;transform:scaleX(0.9300);transform-origin:0 0;">Risk</div>
<div style="left:2251px;top:2051px;width:35.5px;height:33px;background:#f0f0f0;border:1px solid #b9b9b9;border-right-color:#9a9a9a;border-bottom-color:#9a9a9a;"></div>
<div style="left:2256.80px;top:2053.00px;height:16px;line-height:16px;font-size:12.5px;color:#000;white-space:pre;transform:scaleX(0.9300);transform-origin:0 0;">Hide</div>
<div style="left:2255.19px;top:2066.00px;height:16px;line-height:16px;font-size:12.5px;color:#000;white-space:pre;transform:scaleX(0.9300);transform-origin:0 0;">Draw</div>
<div style="left:2287px;top:2051px;width:31.4px;height:33px;background:#f0f0f0;border:1px solid #b9b9b9;border-right-color:#9a9a9a;border-bottom-color:#9a9a9a;"></div>
<div style="left:2290.43px;top:2053.00px;height:16px;line-height:16px;font-size:12.5px;color:#000;white-space:pre;transform:scaleX(0.9300);transform-origin:0 0;">Horz</div>
<div style="left:2291.71px;top:2066.00px;height:16px;line-height:16px;font-size:12.5px;color:#000;white-space:pre;transform:scaleX(0.9300);transform-origin:0 0;">Line</div>
<div style="left:1930px;top:2085px;width:54.6px;height:21.6px;background:#0078d7;"></div>
<div style="left:1933.30px;top:2088.00px;height:16px;line-height:16px;font-size:12.5px;color:#fff;white-space:pre;transform:scaleX(0.8636);transform-origin:0 0;">DAX_Test</div>
<div style="left:1985px;top:2085px;width:23.5px;height:21.6px;background:#f0f0f0;border:1px solid #c0c0c0;"></div>
<div style="left:1989.20px;top:2088.00px;height:16px;line-height:16px;font-size:12.5px;color:#000;white-space:pre;transform:scaleX(0.9819);transform-origin:0 0;">Oil</div>
<div style="left:1930px;top:2108.4px;width:1532.5px;height:5.5px;background:#a8a8a8;border-top:1px solid #888;border-bottom:1px solid #fff;"></div>
<div style="left:1927.7px;top:2116px;width:1536.8px;height:2px;background:#2f86c0;"></div>
<div style="left:1920px;top:2120px;width:1920px;height:40px;background:linear-gradient(90deg,#243b45 0%,#22343f 50%,#1e2c42 75%,#1b2644 100%);"></div>
<div style="left:2459px;top:2120px;width:47px;height:40px;background:rgba(255,255,255,0.16);"></div>
<div style="left:2459px;top:2158px;width:47px;height:2px;background:#76b9ed;"></div>
<div style="left:2506px;top:2120px;width:1.5px;height:40px;background:rgba(255,255,255,0.10);"></div>
<div style="left:2365px;top:2158px;width:40px;height:2px;background:#76b9ed;"></div>
<svg style="left:1935.5px;top:2131.5px" width="17.0" height="17.0" viewBox="0 0 17 17"><g fill="#fff">
<polygon points="0,2.3 7,1.3 7,8 0,8"/>
<polygon points="8,1.2 17,0 17,8 8,8"/>
<polygon points="0,9 7,9 7,15.7 0,14.7"/>
<polygon points="8,9 17,9 17,17 8,15.8"/>
</g></svg>
<svg style="left:1983px;top:2131px" width="18" height="18" viewBox="0 0 18 18"><g fill="none" stroke="#fff" stroke-width="1.4"><circle cx="11.5" cy="7.5" r="5.3"/><line x1="7.8" y1="11.3" x2="1.5" y2="17.5"/></g></svg>
<svg style="left:2031px;top:2131px" width="19" height="18" viewBox="0 0 19 18"><g fill="none" stroke="#fff" stroke-width="1.3">
<rect x="2.5" y="5" width="11" height="8"/>
<line x1="1" y1="1.5" x2="14" y2="1.5"/><line x1="1" y1="16.5" x2="14" y2="16.5"/>
<line x1="17" y1="1" x2="17" y2="4"/><line x1="17" y1="6.5" x2="17" y2="17"/>
</g></svg>
<svg style="left:2078.5px;top:2129px" width="24" height="21" viewBox="0 0 24 21"><path d="M1,3 h8 l2,2 h12 v14 h-22 z" fill="#e8b320"/>
<rect x="1" y="7" width="22" height="12" fill="#ffd35c"/>
<path d="M7,19 v-5 h10 v5 h-3 v-2 h-4 v2 z" fill="#3e8ee0"/></svg>
<svg style="left:2127.5px;top:2128px" width="24" height="24" viewBox="0 0 24 24"><path d="M7,6 v-3 a2,2 0 0 1 2,-2 h6 a2,2 0 0 1 2,2 v3" fill="none" stroke="#2a9be8" stroke-width="1.8"/>
<rect x="1" y="5" width="22" height="18" rx="3" fill="#f4f4f4"/>
<rect x="1" y="18" width="22" height="5" rx="2" fill="#d8d8d8"/>
<rect x="7.5" y="9" width="4" height="4" fill="#f35325"/><rect x="12.5" y="9" width="4" height="4" fill="#81bc06"/>
<rect x="7.5" y="14" width="4" height="4" fill="#05a6f0"/><rect x="12.5" y="14" width="4" height="4" fill="#ffba08"/></svg>
<svg style="left:2177px;top:2129px" width="24" height="23" viewBox="0 0 24 23"><path d="M1,8 l11,-7 l11,7 v13 h-22 z" fill="#0a5fbf"/>
<path d="M3,8 h18 v6 l-9,5 l-9,-5 z" fill="#fff"/>
<path d="M1,8 l11,7 l11,-7 v14 h-22 z" fill="#1e9be8"/>
<path d="M1,22 l11,-8 l11,8 z" fill="#2ab0f5"/></svg>
<svg style="left:2227px;top:2129px" width="24" height="23" viewBox="0 0 24 23"><ellipse cx="11" cy="10" rx="10" ry="7" fill="#f2f2f2" stroke="#e03a3a" stroke-width="2" transform="rotate(-20 11 10)"/>
<ellipse cx="9" cy="15" rx="7" ry="3" fill="#9a9a9a" opacity="0.8"/>
<line x1="11" y1="2" x2="14" y2="17" stroke="#666" stroke-width="1"/>
<circle cx="13" cy="19" r="2.4" fill="none" stroke="#2a8be0" stroke-width="1.6"/>
<circle cx="19" cy="18" r="2.4" fill="none" stroke="#2a8be0" stroke-width="1.6"/></svg>
<svg style="left:2275px;top:2128px" width="24" height="24" viewBox="0 0 24 24"><rect x="0" y="0" width="24" height="24" fill="#131722"/>
<path d="M3,8 h7 v8 h-3 v-5 h-4 z" fill="#fff"/><circle cx="12.5" cy="9.5" r="1.6" fill="#fff"/>
<path d="M13,16 l4,-8 h4 l-4,8 z" fill="#fff"/></svg>
<svg style="left:2324px;top:2128px" width="24" height="24" viewBox="0 0 24 24"><defs><linearGradient id="eg4a" x1="0" y1="0.2" x2="1" y2="0.6"><stop offset="0" stop-color="#35c4f4"/><stop offset="0.5" stop-color="#2cc4c8"/><stop offset="1" stop-color="#6ae858"/></linearGradient>
<linearGradient id="eg4b" x1="0" y1="0" x2="0.2" y2="1"><stop offset="0" stop-color="#1290e0"/><stop offset="1" stop-color="#0878d8"/></linearGradient>
<clipPath id="ec4"><circle cx="12" cy="12" r="11.8"/></clipPath></defs>
<g clip-path="url(#ec4)">
<rect x="0" y="0" width="24" height="24" fill="url(#eg4a)"/>
<path d="M-1,11 Q3,6.5 8,6.8 Q12.5,7.2 14.5,10.5 Q11,10 9.5,13 Q8.5,17 11,20.5 Q13,24.5 17,25 L-1,25z" fill="url(#eg4b)"/>
<path d="M14.5,10.5 Q11,10 9.5,13 Q8.5,17 11,20.5 Q13,24.5 17,25 L25,25 L25,18.6 Q21,20.2 18.5,20 Q13.8,19.5 12.2,15.5 Q11.6,12.5 14.5,10.5z" fill="#0e54a4"/>
<path d="M12.2,15.5 Q11.6,12 14,11.3 Q16,11 16.4,13 Q16.2,14.5 15.5,15.2 Q16.5,17.5 19.5,18 Q22,18.3 25,17.8 L25,18.6 Q21,20.2 18.5,20 Q13.8,19.5 12.2,15.5z" fill="#22343f"/>
</g></svg>
<svg style="left:2373px;top:2128px" width="24" height="24" viewBox="0 0 24 24"><defs><linearGradient id="opg" x1="0" y1="0" x2="1" y2="1"><stop offset="0" stop-color="#ff1b2d"/><stop offset="1" stop-color="#c8101e"/></linearGradient></defs>
<ellipse cx="12" cy="12" rx="10.8" ry="11.2" fill="url(#opg)"/>
<ellipse cx="12" cy="12" rx="4.6" ry="8.4" fill="#22343f"/></svg>
<svg style="left:2422px;top:2128px" width="24" height="24" viewBox="0 0 24 24"><defs><radialGradient id="org" cx="0.65" cy="0.35" r="0.75"><stop offset="0" stop-color="#ffb000"/><stop offset="1" stop-color="#ff7a00"/></radialGradient></defs>
<circle cx="12" cy="12" r="12" fill="url(#org)"/>
<rect x="7.6" y="5.4" width="9.2" height="2.6" rx="1.3" fill="#fff"/>
<rect x="4.3" y="10.7" width="8.4" height="2.6" rx="1.3" fill="#fff"/>
<rect x="7.2" y="16.5" width="9.6" height="2.6" rx="1.3" fill="#fff"/></svg>
<svg style="left:2470.5px;top:2128px" width="24" height="24" viewBox="0 0 24 24"><defs><radialGradient id="gg9" cx="0.42" cy="0.33" r="0.7"><stop offset="0" stop-color="#b8f0ff"/><stop offset="0.35" stop-color="#4ab8ec"/><stop offset="1" stop-color="#1448a0"/></radialGradient>
<radialGradient id="gc9" cx="0.45" cy="0.35" r="0.75"><stop offset="0" stop-color="#d8f860"/><stop offset="0.6" stop-color="#a8d038"/><stop offset="1" stop-color="#7aa818"/></radialGradient>
<radialGradient id="gh9" cx="0.5" cy="0.5" r="0.5"><stop offset="0" stop-color="#ffffff" stop-opacity="0.75"/><stop offset="1" stop-color="#ffffff" stop-opacity="0"/></radialGradient>
<clipPath id="gcl9"><circle cx="12" cy="12" r="10.8"/></clipPath></defs>
<circle cx="12" cy="12" r="10.8" fill="url(#gg9)"/>
<g clip-path="url(#gcl9)" fill="url(#gc9)">
<path d="M11.5,2.5 L16,1 L20,3 L23,7 L23.5,10.8 L21,11.2 L18.5,10.6 L16,11.3 L14,10.6 L11,10.4 L9.6,8.2 L10.6,6.2 L12,5z"/>
<path d="M6,3.8 L9.8,1.6 L10,3 L7.5,4.8z"/>
<path d="M5.5,15.6 L5.8,14 L9.7,11.7 L13,12 L16.4,12.1 L19.3,13.2 L20.3,15.9 L18.3,19.8 L15.5,22.3 L13.1,23 L11.6,19.4 L6.8,17.9z"/>
</g>
<circle cx="9.7" cy="7.3" r="4" fill="url(#gh9)"/></svg>
<div style="left:3790.00px;top:2122.00px;height:16px;line-height:16px;font-size:12px;color:#fff;white-space:pre;transform:scaleX(0.9324);transform-origin:0 0;">07:29</div>
<div style="left:3776.00px;top:2140.00px;height:16px;line-height:16px;font-size:12px;color:#fff;white-space:pre;transform:scaleX(0.9324);transform-origin:0 0;">17/03/2023</div>
<div style="left:1920px;top:2160px;width:1920px;height:10px;background:#000;"></div>
</body></html>
